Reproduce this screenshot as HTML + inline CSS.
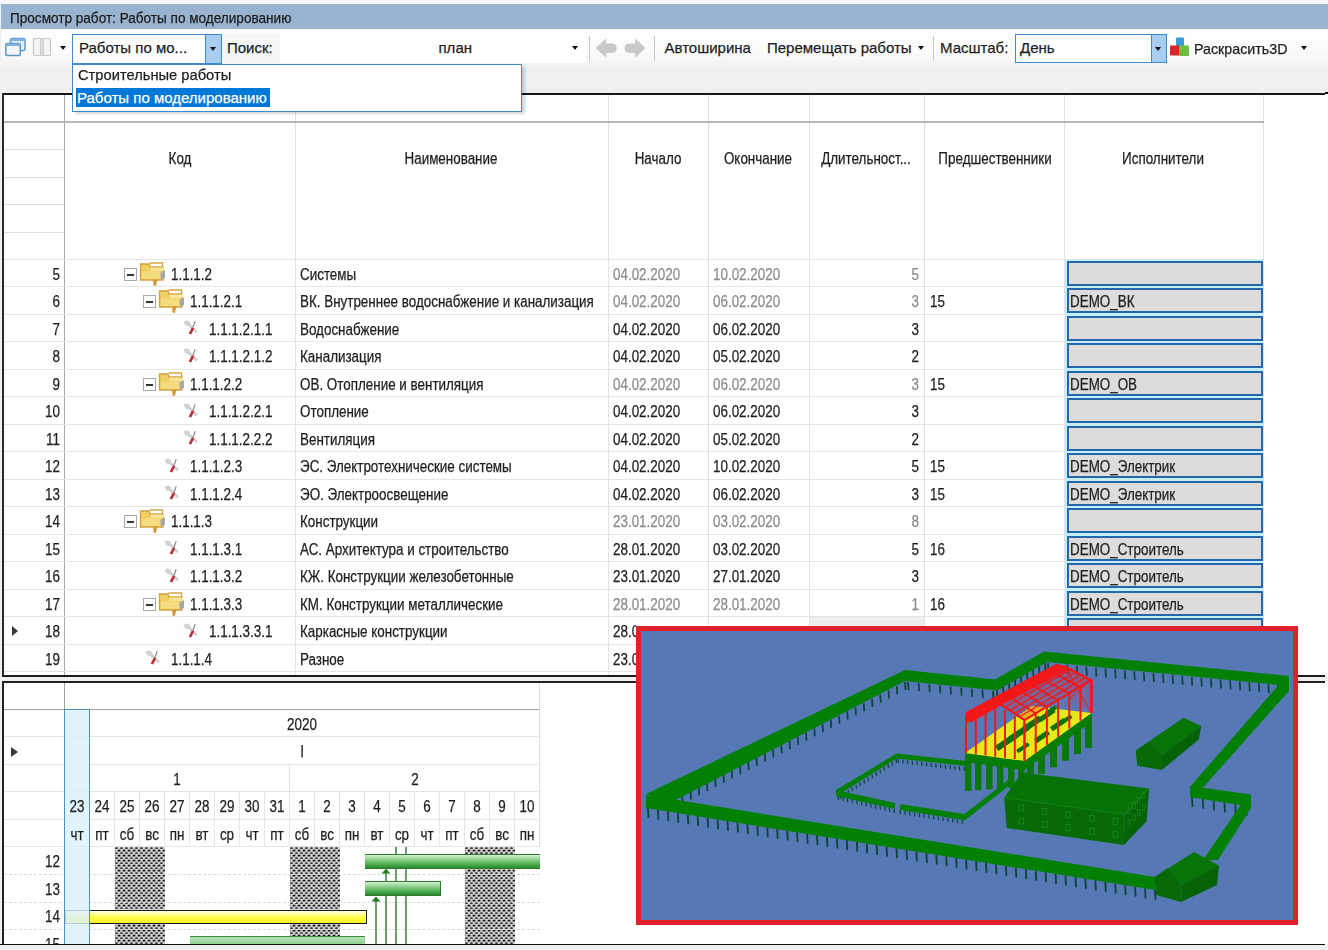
<!DOCTYPE html><html><head><meta charset="utf-8"><style>
*{margin:0;padding:0;box-sizing:border-box}
html,body{width:1328px;height:950px;overflow:hidden;background:#f0f0f0;font-family:"Liberation Sans",sans-serif;color:#1e1e1e}
.a{position:absolute}
.t{position:absolute;white-space:nowrap;line-height:1;-webkit-text-stroke:0.25px currentColor}
.g{font-size:13.6px}
.tb{font-size:15px}
.gr{color:#8a8a8a}
.hl{position:absolute;height:1px;background:#e3e3e3}
.vl{position:absolute;width:1px;background:#e3e3e3}
</style></head><body>
<div class="a" style="left:0;top:0;width:1328px;height:4px;background:#f8f8fc"></div>
<div class="a" style="left:1px;top:4px;width:1327px;height:25px;background:#99b4d1"></div>
<div class="t" style="left:9.50px;top:9.90px;font-size:15px;color:#1a1a1a;transform:scaleX(0.905);transform-origin:0 0;">Просмотр работ: Работы по моделированию</div>
<div class="a" style="left:1px;top:29px;width:1327px;height:65px;background:linear-gradient(#fefefe 0px,#fbfbfb 22px,#f5f5f5 33px,#f0f0f0 40px,#f0f0f0 65px)"></div>
<div class="a" style="left:222px;top:34px;width:58px;height:29px;background:#f6f6f6"></div>
<svg class="a" style="left:4px;top:36px" width="24" height="22" viewBox="0 0 24 22">
<rect x="6.5" y="2.5" width="14.5" height="12" rx="1.5" fill="#e4f0fa" stroke="#5e98c8" stroke-width="1.5"/>
<rect x="6.5" y="2.5" width="14.5" height="2.5" fill="#7cb0de"/>
<rect x="1.8" y="7.5" width="14.5" height="12" rx="1.5" fill="#eef4f8" stroke="#5e94c0" stroke-width="1.5"/>
<rect x="1.8" y="7.5" width="14.5" height="2.5" fill="#7cb0de"/>
</svg>
<svg class="a" style="left:32px;top:37px" width="20" height="20" viewBox="0 0 20 20">
<rect x="1.5" y="1.5" width="17" height="17" rx="1" fill="#f4f4f4" stroke="#c8c8c8" stroke-width="1.2"/>
<rect x="8.6" y="1.5" width="2.8" height="17" fill="#dedede"/>
<line x1="8.6" y1="1.5" x2="8.6" y2="18.5" stroke="#c4c4c4" stroke-width="0.8"/><line x1="11.4" y1="1.5" x2="11.4" y2="18.5" stroke="#c4c4c4" stroke-width="0.8"/>
</svg>
<div class="a" style="left:60px;top:46px;width:0;height:0;border-left:3.5px solid transparent;border-right:3.5px solid transparent;border-top:4px solid #111"></div>
<div class="a" style="left:72px;top:34px;width:150px;height:30px;background:#fff;border:1px solid #3c8bd0"></div>
<div class="a" style="left:205px;top:35px;width:16px;height:28px;background:#a8cdee;border-left:1px solid #3c8bd0"></div>
<div class="a" style="left:209.5px;top:47px;width:0;height:0;border-left:3.5px solid transparent;border-right:3.5px solid transparent;border-top:4px solid #111"></div>
<div class="t" style="left:79.00px;top:40.30px;font-size:15px;transform:scaleX(1);transform-origin:0 0;">Работы по мо...</div>
<div class="t" style="left:227.00px;top:40.30px;font-size:15px;transform:scaleX(1);transform-origin:0 0;">Поиск:</div>
<div class="a" style="left:280px;top:33px;width:305px;height:30px;background:#ffffff"></div>
<div class="t" style="left:438.50px;top:40.30px;font-size:15px;transform:scaleX(1);transform-origin:0 0;">план</div>
<div class="a" style="left:572px;top:46px;width:0;height:0;border-left:3.5px solid transparent;border-right:3.5px solid transparent;border-top:4px solid #111"></div>
<div class="a" style="left:589px;top:36px;width:1px;height:25px;background:#c8c8c8"></div>
<svg class="a" style="left:595px;top:38px" width="52" height="20" viewBox="0 0 52 20">
<path d="M1.1 10 L10.8 1.2 L10.8 5.9 L17 5.9 Q21.3 5.9 21.3 10.2 Q21.3 14.5 17 14.5 L10.8 14.5 L10.8 19 Z" fill="#c9c9c9" stroke="#bcbcbc" stroke-width="0.6"/>
<path d="M50.1 10 L40.6 1.2 L40.6 5.9 L34.2 5.9 Q30 5.9 30 10.2 Q30 14.5 34.2 14.5 L40.6 14.5 L40.6 19 Z" fill="#c9c9c9" stroke="#bcbcbc" stroke-width="0.6"/>
</svg>
<div class="a" style="left:654px;top:36px;width:1px;height:25px;background:#c8c8c8"></div>
<div class="t" style="left:664.50px;top:40.30px;font-size:15px;transform:scaleX(1);transform-origin:0 0;">Автоширина</div>
<div class="t" style="left:767.00px;top:40.30px;font-size:15px;transform:scaleX(1);transform-origin:0 0;">Перемещать работы</div>
<div class="a" style="left:917.5px;top:46px;width:0;height:0;border-left:3.5px solid transparent;border-right:3.5px solid transparent;border-top:4px solid #111"></div>
<div class="a" style="left:933px;top:36px;width:1px;height:25px;background:#c8c8c8"></div>
<div class="t" style="left:940.00px;top:40.30px;font-size:15px;transform:scaleX(1);transform-origin:0 0;">Масштаб:</div>
<div class="a" style="left:1015px;top:34px;width:152px;height:29px;background:#fff;border:1px solid #3c8bd0"></div>
<div class="a" style="left:1151px;top:35px;width:15px;height:27px;background:#a8cdee;border-left:1px solid #3c8bd0"></div>
<div class="a" style="left:1155px;top:47px;width:0;height:0;border-left:3.5px solid transparent;border-right:3.5px solid transparent;border-top:4px solid #111"></div>
<div class="t" style="left:1020.00px;top:40.30px;font-size:15px;transform:scaleX(1);transform-origin:0 0;">День</div>
<svg class="a" style="left:1169px;top:37px" width="21" height="20" viewBox="0 0 21 20">
<rect x="7" y="0.5" width="8" height="8.5" rx="1" fill="#3a9ad8"/>
<rect x="1" y="8.5" width="9.5" height="10" rx="1" fill="#d9262b"/>
<rect x="10" y="8.5" width="10" height="10.5" rx="1" fill="#6cbf3c"/>
</svg>
<div class="t" style="left:1194.30px;top:40.80px;font-size:15px;transform:scaleX(0.95);transform-origin:0 0;">Раскрасить3D</div>
<div class="a" style="left:1301px;top:46px;width:0;height:0;border-left:3.5px solid transparent;border-right:3.5px solid transparent;border-top:4px solid #111"></div>
<div class="a" style="left:2px;top:94px;width:1326px;height:582px;background:#fff"></div>
<div class="a" style="left:1325px;top:92px;width:3px;height:1.5px;background:#111"></div>
<div class="a" style="left:2px;top:93px;width:1323px;height:2px;background:#161616"></div>
<div class="a" style="left:2px;top:93px;width:2px;height:583px;background:#2a2a2a"></div>
<div class="a" style="left:2px;top:675px;width:1323px;height:1.5px;background:#1a1a1a"></div>
<div class="a" style="left:64px;top:95px;width:1px;height:580px;background:#a8a8a8"></div>
<div class="a" style="left:295px;top:95px;width:1px;height:580px;background:#e2e2e2"></div>
<div class="a" style="left:608px;top:95px;width:1px;height:580px;background:#e2e2e2"></div>
<div class="a" style="left:708px;top:95px;width:1px;height:580px;background:#e2e2e2"></div>
<div class="a" style="left:809px;top:95px;width:1px;height:580px;background:#e2e2e2"></div>
<div class="a" style="left:924px;top:95px;width:1px;height:580px;background:#e2e2e2"></div>
<div class="a" style="left:1064px;top:95px;width:1px;height:580px;background:#e2e2e2"></div>
<div class="a" style="left:1263px;top:95px;width:1px;height:580px;background:#e2e2e2"></div>
<div class="a" style="left:4px;top:121px;width:1260px;height:1.7px;background:#b8b8b8"></div>
<div class="a" style="left:4px;top:149px;width:60px;height:1px;background:#e0e0e0"></div>
<div class="a" style="left:4px;top:177px;width:60px;height:1px;background:#e0e0e0"></div>
<div class="a" style="left:4px;top:204px;width:60px;height:1px;background:#e0e0e0"></div>
<div class="a" style="left:4px;top:232px;width:60px;height:1px;background:#e0e0e0"></div>
<div class="a" style="left:4px;top:259px;width:1259px;height:1px;background:#e5e5e5"></div>
<div class="a" style="left:4px;top:286px;width:1259px;height:1px;background:#e5e5e5"></div>
<div class="a" style="left:4px;top:314px;width:1259px;height:1px;background:#e5e5e5"></div>
<div class="a" style="left:4px;top:341px;width:1259px;height:1px;background:#e5e5e5"></div>
<div class="a" style="left:4px;top:369px;width:1259px;height:1px;background:#e5e5e5"></div>
<div class="a" style="left:4px;top:396px;width:1259px;height:1px;background:#e5e5e5"></div>
<div class="a" style="left:4px;top:424px;width:1259px;height:1px;background:#e5e5e5"></div>
<div class="a" style="left:4px;top:451px;width:1259px;height:1px;background:#e5e5e5"></div>
<div class="a" style="left:4px;top:479px;width:1259px;height:1px;background:#e5e5e5"></div>
<div class="a" style="left:4px;top:506px;width:1259px;height:1px;background:#e5e5e5"></div>
<div class="a" style="left:4px;top:534px;width:1259px;height:1px;background:#e5e5e5"></div>
<div class="a" style="left:4px;top:561px;width:1259px;height:1px;background:#e5e5e5"></div>
<div class="a" style="left:4px;top:589px;width:1259px;height:1px;background:#e5e5e5"></div>
<div class="a" style="left:4px;top:616px;width:1259px;height:1px;background:#e5e5e5"></div>
<div class="a" style="left:4px;top:644px;width:1259px;height:1px;background:#e5e5e5"></div>
<div class="a" style="left:4px;top:671px;width:1259px;height:1px;background:#e5e5e5"></div>
<div class="t" style="left:30.00px;width:300px;text-align:center;top:150.59px;font-size:15.6px;transform:scaleX(0.86);transform-origin:50% 0;">Код</div>
<div class="t" style="left:301.00px;width:300px;text-align:center;top:150.59px;font-size:15.6px;transform:scaleX(0.86);transform-origin:50% 0;">Наименование</div>
<div class="t" style="left:508.00px;width:300px;text-align:center;top:150.59px;font-size:15.6px;transform:scaleX(0.86);transform-origin:50% 0;">Начало</div>
<div class="t" style="left:607.80px;width:300px;text-align:center;top:150.59px;font-size:15.6px;transform:scaleX(0.86);transform-origin:50% 0;">Окончание</div>
<div class="t" style="left:716.00px;width:300px;text-align:center;top:150.59px;font-size:15.6px;transform:scaleX(0.86);transform-origin:50% 0;">Длительност...</div>
<div class="t" style="left:844.50px;width:300px;text-align:center;top:150.59px;font-size:15.6px;transform:scaleX(0.86);transform-origin:50% 0;">Предшественники</div>
<div class="t" style="left:1013.00px;width:300px;text-align:center;top:150.59px;font-size:15.6px;transform:scaleX(0.86);transform-origin:50% 0;">Исполнители</div>
<div class="t" style="left:0.00px;width:60px;text-align:right;top:266.69px;font-size:15.6px;transform:scaleX(0.86);transform-origin:100% 0;">5</div>
<div class="a" style="left:124px;top:268px;width:13px;height:13px;border:1px solid #a8a8a8;background:#fff"><div class="a" style="left:2px;top:5px;width:7px;height:1.5px;background:#333"></div></div>
<svg class="a" style="left:139px;top:261.8px" width="28" height="26" viewBox="0 0 28 26">
<path d="M10.5 1 h13 v4" fill="none" stroke="#d6a843" stroke-width="1.3"/>
<path d="M1.5 2 h8.5 l1 3 h13 v13 h-22.5 z" fill="#f2cf62" stroke="#d3a23e" stroke-width="1.3"/>
<path d="M11.5 5.5 h13.5 v3.5 h-13.5 z" fill="#f7e49a"/>
<rect x="3" y="9.5" width="18" height="7.5" fill="#f6dc80"/>
<path d="M21.5 11 L26 8 L26 16 L22 18 Z" fill="#a4a8ae"/>
<path d="M14 18 L18.5 17 L17 24 L14.5 23.5 Z" fill="#d49a3a"/>
</svg>
<div class="t" style="left:170.50px;top:266.69px;font-size:15.6px;transform:scaleX(0.86);transform-origin:0 0;">1.1.1.2</div>
<div class="t" style="left:300.00px;top:266.69px;font-size:15.6px;transform:scaleX(0.86);transform-origin:0 0;">Системы</div>
<div class="t" style="left:613.00px;top:266.69px;font-size:15.6px;color:#8c8c8c;transform:scaleX(0.86);transform-origin:0 0;">04.02.2020</div>
<div class="t" style="left:713.00px;top:266.69px;font-size:15.6px;color:#8c8c8c;transform:scaleX(0.86);transform-origin:0 0;">10.02.2020</div>
<div class="t" style="left:820.00px;width:99px;text-align:right;top:266.69px;font-size:15.6px;color:#8c8c8c;transform:scaleX(0.86);transform-origin:100% 0;">5</div>
<div class="a" style="left:1065px;top:259px;width:198px;height:29px;background:#c4eefd"></div>
<div class="a" style="left:1066.5px;top:261px;width:196px;height:25px;background:#dcdcdc;border:2.5px solid #2568aa"></div>
<div class="t" style="left:0.00px;width:60px;text-align:right;top:294.19px;font-size:15.6px;transform:scaleX(0.86);transform-origin:100% 0;">6</div>
<div class="a" style="left:143px;top:295px;width:13px;height:13px;border:1px solid #a8a8a8;background:#fff"><div class="a" style="left:2px;top:5px;width:7px;height:1.5px;background:#333"></div></div>
<svg class="a" style="left:158px;top:289.3px" width="28" height="26" viewBox="0 0 28 26">
<path d="M10.5 1 h13 v4" fill="none" stroke="#d6a843" stroke-width="1.3"/>
<path d="M1.5 2 h8.5 l1 3 h13 v13 h-22.5 z" fill="#f2cf62" stroke="#d3a23e" stroke-width="1.3"/>
<path d="M11.5 5.5 h13.5 v3.5 h-13.5 z" fill="#f7e49a"/>
<rect x="3" y="9.5" width="18" height="7.5" fill="#f6dc80"/>
<path d="M21.5 11 L26 8 L26 16 L22 18 Z" fill="#a4a8ae"/>
<path d="M14 18 L18.5 17 L17 24 L14.5 23.5 Z" fill="#d49a3a"/>
</svg>
<div class="t" style="left:189.50px;top:294.19px;font-size:15.6px;transform:scaleX(0.86);transform-origin:0 0;">1.1.1.2.1</div>
<div class="t" style="left:300.00px;top:294.19px;font-size:15.6px;transform:scaleX(0.86);transform-origin:0 0;">ВК. Внутреннее водоснабжение и канализация</div>
<div class="t" style="left:613.00px;top:294.19px;font-size:15.6px;color:#8c8c8c;transform:scaleX(0.86);transform-origin:0 0;">04.02.2020</div>
<div class="t" style="left:713.00px;top:294.19px;font-size:15.6px;color:#8c8c8c;transform:scaleX(0.86);transform-origin:0 0;">06.02.2020</div>
<div class="t" style="left:820.00px;width:99px;text-align:right;top:294.19px;font-size:15.6px;color:#8c8c8c;transform:scaleX(0.86);transform-origin:100% 0;">3</div>
<div class="t" style="left:929.70px;top:294.19px;font-size:15.6px;transform:scaleX(0.86);transform-origin:0 0;">15</div>
<div class="a" style="left:1065px;top:286px;width:198px;height:29px;background:#c4eefd"></div>
<div class="a" style="left:1066.5px;top:288px;width:196px;height:25px;background:#dcdcdc;border:2.5px solid #2568aa"></div>
<div class="t" style="left:1069.50px;top:294.19px;font-size:15.6px;transform:scaleX(0.86);transform-origin:0 0;">DEMO_ВК</div>
<div class="t" style="left:0.00px;width:60px;text-align:right;top:321.69px;font-size:15.6px;transform:scaleX(0.86);transform-origin:100% 0;">7</div>
<svg class="a" style="left:182.5px;top:320.3px" width="16" height="16" viewBox="0 0 16 16">
<path d="M0.5 2 Q3 -0.8 6.5 1.5 L7.5 4 L14.8 11.3 L13 13.6 L5.5 6.2 L2.3 5.6 Z" fill="#d2d2d2"/>
<line x1="12.2" y1="1.2" x2="10" y2="7.2" stroke="#8a8a8a" stroke-width="1.2"/>
<path d="M9 7.3 L11.2 8.4 L8.2 14.6 L5.6 13.5 Z" fill="#b8303a"/>
</svg>
<div class="t" style="left:208.50px;top:321.69px;font-size:15.6px;transform:scaleX(0.86);transform-origin:0 0;">1.1.1.2.1.1</div>
<div class="t" style="left:300.00px;top:321.69px;font-size:15.6px;transform:scaleX(0.86);transform-origin:0 0;">Водоснабжение</div>
<div class="t" style="left:613.00px;top:321.69px;font-size:15.6px;transform:scaleX(0.86);transform-origin:0 0;">04.02.2020</div>
<div class="t" style="left:713.00px;top:321.69px;font-size:15.6px;transform:scaleX(0.86);transform-origin:0 0;">06.02.2020</div>
<div class="t" style="left:820.00px;width:99px;text-align:right;top:321.69px;font-size:15.6px;transform:scaleX(0.86);transform-origin:100% 0;">3</div>
<div class="a" style="left:1065px;top:314px;width:198px;height:29px;background:#c4eefd"></div>
<div class="a" style="left:1066.5px;top:316px;width:196px;height:25px;background:#dcdcdc;border:2.5px solid #2568aa"></div>
<div class="t" style="left:0.00px;width:60px;text-align:right;top:349.19px;font-size:15.6px;transform:scaleX(0.86);transform-origin:100% 0;">8</div>
<svg class="a" style="left:182.5px;top:347.8px" width="16" height="16" viewBox="0 0 16 16">
<path d="M0.5 2 Q3 -0.8 6.5 1.5 L7.5 4 L14.8 11.3 L13 13.6 L5.5 6.2 L2.3 5.6 Z" fill="#d2d2d2"/>
<line x1="12.2" y1="1.2" x2="10" y2="7.2" stroke="#8a8a8a" stroke-width="1.2"/>
<path d="M9 7.3 L11.2 8.4 L8.2 14.6 L5.6 13.5 Z" fill="#b8303a"/>
</svg>
<div class="t" style="left:208.50px;top:349.19px;font-size:15.6px;transform:scaleX(0.86);transform-origin:0 0;">1.1.1.2.1.2</div>
<div class="t" style="left:300.00px;top:349.19px;font-size:15.6px;transform:scaleX(0.86);transform-origin:0 0;">Канализация</div>
<div class="t" style="left:613.00px;top:349.19px;font-size:15.6px;transform:scaleX(0.86);transform-origin:0 0;">04.02.2020</div>
<div class="t" style="left:713.00px;top:349.19px;font-size:15.6px;transform:scaleX(0.86);transform-origin:0 0;">05.02.2020</div>
<div class="t" style="left:820.00px;width:99px;text-align:right;top:349.19px;font-size:15.6px;transform:scaleX(0.86);transform-origin:100% 0;">2</div>
<div class="a" style="left:1065px;top:341px;width:198px;height:29px;background:#c4eefd"></div>
<div class="a" style="left:1066.5px;top:343px;width:196px;height:25px;background:#dcdcdc;border:2.5px solid #2568aa"></div>
<div class="t" style="left:0.00px;width:60px;text-align:right;top:376.69px;font-size:15.6px;transform:scaleX(0.86);transform-origin:100% 0;">9</div>
<div class="a" style="left:143px;top:378px;width:13px;height:13px;border:1px solid #a8a8a8;background:#fff"><div class="a" style="left:2px;top:5px;width:7px;height:1.5px;background:#333"></div></div>
<svg class="a" style="left:158px;top:371.8px" width="28" height="26" viewBox="0 0 28 26">
<path d="M10.5 1 h13 v4" fill="none" stroke="#d6a843" stroke-width="1.3"/>
<path d="M1.5 2 h8.5 l1 3 h13 v13 h-22.5 z" fill="#f2cf62" stroke="#d3a23e" stroke-width="1.3"/>
<path d="M11.5 5.5 h13.5 v3.5 h-13.5 z" fill="#f7e49a"/>
<rect x="3" y="9.5" width="18" height="7.5" fill="#f6dc80"/>
<path d="M21.5 11 L26 8 L26 16 L22 18 Z" fill="#a4a8ae"/>
<path d="M14 18 L18.5 17 L17 24 L14.5 23.5 Z" fill="#d49a3a"/>
</svg>
<div class="t" style="left:189.50px;top:376.69px;font-size:15.6px;transform:scaleX(0.86);transform-origin:0 0;">1.1.1.2.2</div>
<div class="t" style="left:300.00px;top:376.69px;font-size:15.6px;transform:scaleX(0.86);transform-origin:0 0;">ОВ. Отопление и вентиляция</div>
<div class="t" style="left:613.00px;top:376.69px;font-size:15.6px;color:#8c8c8c;transform:scaleX(0.86);transform-origin:0 0;">04.02.2020</div>
<div class="t" style="left:713.00px;top:376.69px;font-size:15.6px;color:#8c8c8c;transform:scaleX(0.86);transform-origin:0 0;">06.02.2020</div>
<div class="t" style="left:820.00px;width:99px;text-align:right;top:376.69px;font-size:15.6px;color:#8c8c8c;transform:scaleX(0.86);transform-origin:100% 0;">3</div>
<div class="t" style="left:929.70px;top:376.69px;font-size:15.6px;transform:scaleX(0.86);transform-origin:0 0;">15</div>
<div class="a" style="left:1065px;top:369px;width:198px;height:29px;background:#c4eefd"></div>
<div class="a" style="left:1066.5px;top:371px;width:196px;height:25px;background:#dcdcdc;border:2.5px solid #2568aa"></div>
<div class="t" style="left:1069.50px;top:376.69px;font-size:15.6px;transform:scaleX(0.86);transform-origin:0 0;">DEMO_ОВ</div>
<div class="t" style="left:0.00px;width:60px;text-align:right;top:404.19px;font-size:15.6px;transform:scaleX(0.86);transform-origin:100% 0;">10</div>
<svg class="a" style="left:182.5px;top:402.8px" width="16" height="16" viewBox="0 0 16 16">
<path d="M0.5 2 Q3 -0.8 6.5 1.5 L7.5 4 L14.8 11.3 L13 13.6 L5.5 6.2 L2.3 5.6 Z" fill="#d2d2d2"/>
<line x1="12.2" y1="1.2" x2="10" y2="7.2" stroke="#8a8a8a" stroke-width="1.2"/>
<path d="M9 7.3 L11.2 8.4 L8.2 14.6 L5.6 13.5 Z" fill="#b8303a"/>
</svg>
<div class="t" style="left:208.50px;top:404.19px;font-size:15.6px;transform:scaleX(0.86);transform-origin:0 0;">1.1.1.2.2.1</div>
<div class="t" style="left:300.00px;top:404.19px;font-size:15.6px;transform:scaleX(0.86);transform-origin:0 0;">Отопление</div>
<div class="t" style="left:613.00px;top:404.19px;font-size:15.6px;transform:scaleX(0.86);transform-origin:0 0;">04.02.2020</div>
<div class="t" style="left:713.00px;top:404.19px;font-size:15.6px;transform:scaleX(0.86);transform-origin:0 0;">06.02.2020</div>
<div class="t" style="left:820.00px;width:99px;text-align:right;top:404.19px;font-size:15.6px;transform:scaleX(0.86);transform-origin:100% 0;">3</div>
<div class="a" style="left:1065px;top:396px;width:198px;height:29px;background:#c4eefd"></div>
<div class="a" style="left:1066.5px;top:398px;width:196px;height:25px;background:#dcdcdc;border:2.5px solid #2568aa"></div>
<div class="t" style="left:0.00px;width:60px;text-align:right;top:431.69px;font-size:15.6px;transform:scaleX(0.86);transform-origin:100% 0;">11</div>
<svg class="a" style="left:182.5px;top:430.3px" width="16" height="16" viewBox="0 0 16 16">
<path d="M0.5 2 Q3 -0.8 6.5 1.5 L7.5 4 L14.8 11.3 L13 13.6 L5.5 6.2 L2.3 5.6 Z" fill="#d2d2d2"/>
<line x1="12.2" y1="1.2" x2="10" y2="7.2" stroke="#8a8a8a" stroke-width="1.2"/>
<path d="M9 7.3 L11.2 8.4 L8.2 14.6 L5.6 13.5 Z" fill="#b8303a"/>
</svg>
<div class="t" style="left:208.50px;top:431.69px;font-size:15.6px;transform:scaleX(0.86);transform-origin:0 0;">1.1.1.2.2.2</div>
<div class="t" style="left:300.00px;top:431.69px;font-size:15.6px;transform:scaleX(0.86);transform-origin:0 0;">Вентиляция</div>
<div class="t" style="left:613.00px;top:431.69px;font-size:15.6px;transform:scaleX(0.86);transform-origin:0 0;">04.02.2020</div>
<div class="t" style="left:713.00px;top:431.69px;font-size:15.6px;transform:scaleX(0.86);transform-origin:0 0;">05.02.2020</div>
<div class="t" style="left:820.00px;width:99px;text-align:right;top:431.69px;font-size:15.6px;transform:scaleX(0.86);transform-origin:100% 0;">2</div>
<div class="a" style="left:1065px;top:424px;width:198px;height:29px;background:#c4eefd"></div>
<div class="a" style="left:1066.5px;top:426px;width:196px;height:25px;background:#dcdcdc;border:2.5px solid #2568aa"></div>
<div class="t" style="left:0.00px;width:60px;text-align:right;top:459.19px;font-size:15.6px;transform:scaleX(0.86);transform-origin:100% 0;">12</div>
<svg class="a" style="left:164px;top:457.8px" width="16" height="16" viewBox="0 0 16 16">
<path d="M0.5 2 Q3 -0.8 6.5 1.5 L7.5 4 L14.8 11.3 L13 13.6 L5.5 6.2 L2.3 5.6 Z" fill="#d2d2d2"/>
<line x1="12.2" y1="1.2" x2="10" y2="7.2" stroke="#8a8a8a" stroke-width="1.2"/>
<path d="M9 7.3 L11.2 8.4 L8.2 14.6 L5.6 13.5 Z" fill="#b8303a"/>
</svg>
<div class="t" style="left:190.00px;top:459.19px;font-size:15.6px;transform:scaleX(0.86);transform-origin:0 0;">1.1.1.2.3</div>
<div class="t" style="left:300.00px;top:459.19px;font-size:15.6px;transform:scaleX(0.86);transform-origin:0 0;">ЭС. Электротехнические системы</div>
<div class="t" style="left:613.00px;top:459.19px;font-size:15.6px;transform:scaleX(0.86);transform-origin:0 0;">04.02.2020</div>
<div class="t" style="left:713.00px;top:459.19px;font-size:15.6px;transform:scaleX(0.86);transform-origin:0 0;">10.02.2020</div>
<div class="t" style="left:820.00px;width:99px;text-align:right;top:459.19px;font-size:15.6px;transform:scaleX(0.86);transform-origin:100% 0;">5</div>
<div class="t" style="left:929.70px;top:459.19px;font-size:15.6px;transform:scaleX(0.86);transform-origin:0 0;">15</div>
<div class="a" style="left:1065px;top:451px;width:198px;height:29px;background:#c4eefd"></div>
<div class="a" style="left:1066.5px;top:453px;width:196px;height:25px;background:#dcdcdc;border:2.5px solid #2568aa"></div>
<div class="t" style="left:1069.50px;top:459.19px;font-size:15.6px;transform:scaleX(0.86);transform-origin:0 0;">DEMO_Электрик</div>
<div class="t" style="left:0.00px;width:60px;text-align:right;top:486.69px;font-size:15.6px;transform:scaleX(0.86);transform-origin:100% 0;">13</div>
<svg class="a" style="left:164px;top:485.3px" width="16" height="16" viewBox="0 0 16 16">
<path d="M0.5 2 Q3 -0.8 6.5 1.5 L7.5 4 L14.8 11.3 L13 13.6 L5.5 6.2 L2.3 5.6 Z" fill="#d2d2d2"/>
<line x1="12.2" y1="1.2" x2="10" y2="7.2" stroke="#8a8a8a" stroke-width="1.2"/>
<path d="M9 7.3 L11.2 8.4 L8.2 14.6 L5.6 13.5 Z" fill="#b8303a"/>
</svg>
<div class="t" style="left:190.00px;top:486.69px;font-size:15.6px;transform:scaleX(0.86);transform-origin:0 0;">1.1.1.2.4</div>
<div class="t" style="left:300.00px;top:486.69px;font-size:15.6px;transform:scaleX(0.86);transform-origin:0 0;">ЭО. Электроосвещение</div>
<div class="t" style="left:613.00px;top:486.69px;font-size:15.6px;transform:scaleX(0.86);transform-origin:0 0;">04.02.2020</div>
<div class="t" style="left:713.00px;top:486.69px;font-size:15.6px;transform:scaleX(0.86);transform-origin:0 0;">06.02.2020</div>
<div class="t" style="left:820.00px;width:99px;text-align:right;top:486.69px;font-size:15.6px;transform:scaleX(0.86);transform-origin:100% 0;">3</div>
<div class="t" style="left:929.70px;top:486.69px;font-size:15.6px;transform:scaleX(0.86);transform-origin:0 0;">15</div>
<div class="a" style="left:1065px;top:479px;width:198px;height:29px;background:#c4eefd"></div>
<div class="a" style="left:1066.5px;top:481px;width:196px;height:25px;background:#dcdcdc;border:2.5px solid #2568aa"></div>
<div class="t" style="left:1069.50px;top:486.69px;font-size:15.6px;transform:scaleX(0.86);transform-origin:0 0;">DEMO_Электрик</div>
<div class="t" style="left:0.00px;width:60px;text-align:right;top:514.19px;font-size:15.6px;transform:scaleX(0.86);transform-origin:100% 0;">14</div>
<div class="a" style="left:124px;top:515px;width:13px;height:13px;border:1px solid #a8a8a8;background:#fff"><div class="a" style="left:2px;top:5px;width:7px;height:1.5px;background:#333"></div></div>
<svg class="a" style="left:139px;top:509.3px" width="28" height="26" viewBox="0 0 28 26">
<path d="M10.5 1 h13 v4" fill="none" stroke="#d6a843" stroke-width="1.3"/>
<path d="M1.5 2 h8.5 l1 3 h13 v13 h-22.5 z" fill="#f2cf62" stroke="#d3a23e" stroke-width="1.3"/>
<path d="M11.5 5.5 h13.5 v3.5 h-13.5 z" fill="#f7e49a"/>
<rect x="3" y="9.5" width="18" height="7.5" fill="#f6dc80"/>
<path d="M21.5 11 L26 8 L26 16 L22 18 Z" fill="#a4a8ae"/>
<path d="M14 18 L18.5 17 L17 24 L14.5 23.5 Z" fill="#d49a3a"/>
</svg>
<div class="t" style="left:170.50px;top:514.19px;font-size:15.6px;transform:scaleX(0.86);transform-origin:0 0;">1.1.1.3</div>
<div class="t" style="left:300.00px;top:514.19px;font-size:15.6px;transform:scaleX(0.86);transform-origin:0 0;">Конструкции</div>
<div class="t" style="left:613.00px;top:514.19px;font-size:15.6px;color:#8c8c8c;transform:scaleX(0.86);transform-origin:0 0;">23.01.2020</div>
<div class="t" style="left:713.00px;top:514.19px;font-size:15.6px;color:#8c8c8c;transform:scaleX(0.86);transform-origin:0 0;">03.02.2020</div>
<div class="t" style="left:820.00px;width:99px;text-align:right;top:514.19px;font-size:15.6px;color:#8c8c8c;transform:scaleX(0.86);transform-origin:100% 0;">8</div>
<div class="a" style="left:1065px;top:506px;width:198px;height:29px;background:#c4eefd"></div>
<div class="a" style="left:1066.5px;top:508px;width:196px;height:25px;background:#dcdcdc;border:2.5px solid #2568aa"></div>
<div class="t" style="left:0.00px;width:60px;text-align:right;top:541.69px;font-size:15.6px;transform:scaleX(0.86);transform-origin:100% 0;">15</div>
<svg class="a" style="left:164px;top:540.3px" width="16" height="16" viewBox="0 0 16 16">
<path d="M0.5 2 Q3 -0.8 6.5 1.5 L7.5 4 L14.8 11.3 L13 13.6 L5.5 6.2 L2.3 5.6 Z" fill="#d2d2d2"/>
<line x1="12.2" y1="1.2" x2="10" y2="7.2" stroke="#8a8a8a" stroke-width="1.2"/>
<path d="M9 7.3 L11.2 8.4 L8.2 14.6 L5.6 13.5 Z" fill="#b8303a"/>
</svg>
<div class="t" style="left:190.00px;top:541.69px;font-size:15.6px;transform:scaleX(0.86);transform-origin:0 0;">1.1.1.3.1</div>
<div class="t" style="left:300.00px;top:541.69px;font-size:15.6px;transform:scaleX(0.86);transform-origin:0 0;">АС. Архитектура и строительство</div>
<div class="t" style="left:613.00px;top:541.69px;font-size:15.6px;transform:scaleX(0.86);transform-origin:0 0;">28.01.2020</div>
<div class="t" style="left:713.00px;top:541.69px;font-size:15.6px;transform:scaleX(0.86);transform-origin:0 0;">03.02.2020</div>
<div class="t" style="left:820.00px;width:99px;text-align:right;top:541.69px;font-size:15.6px;transform:scaleX(0.86);transform-origin:100% 0;">5</div>
<div class="t" style="left:929.70px;top:541.69px;font-size:15.6px;transform:scaleX(0.86);transform-origin:0 0;">16</div>
<div class="a" style="left:1065px;top:534px;width:198px;height:29px;background:#c4eefd"></div>
<div class="a" style="left:1066.5px;top:536px;width:196px;height:25px;background:#dcdcdc;border:2.5px solid #2568aa"></div>
<div class="t" style="left:1069.50px;top:541.69px;font-size:15.6px;transform:scaleX(0.86);transform-origin:0 0;">DEMO_Строитель</div>
<div class="t" style="left:0.00px;width:60px;text-align:right;top:569.19px;font-size:15.6px;transform:scaleX(0.86);transform-origin:100% 0;">16</div>
<svg class="a" style="left:164px;top:567.8px" width="16" height="16" viewBox="0 0 16 16">
<path d="M0.5 2 Q3 -0.8 6.5 1.5 L7.5 4 L14.8 11.3 L13 13.6 L5.5 6.2 L2.3 5.6 Z" fill="#d2d2d2"/>
<line x1="12.2" y1="1.2" x2="10" y2="7.2" stroke="#8a8a8a" stroke-width="1.2"/>
<path d="M9 7.3 L11.2 8.4 L8.2 14.6 L5.6 13.5 Z" fill="#b8303a"/>
</svg>
<div class="t" style="left:190.00px;top:569.19px;font-size:15.6px;transform:scaleX(0.86);transform-origin:0 0;">1.1.1.3.2</div>
<div class="t" style="left:300.00px;top:569.19px;font-size:15.6px;transform:scaleX(0.86);transform-origin:0 0;">КЖ. Конструкции железобетонные</div>
<div class="t" style="left:613.00px;top:569.19px;font-size:15.6px;transform:scaleX(0.86);transform-origin:0 0;">23.01.2020</div>
<div class="t" style="left:713.00px;top:569.19px;font-size:15.6px;transform:scaleX(0.86);transform-origin:0 0;">27.01.2020</div>
<div class="t" style="left:820.00px;width:99px;text-align:right;top:569.19px;font-size:15.6px;transform:scaleX(0.86);transform-origin:100% 0;">3</div>
<div class="a" style="left:1065px;top:561px;width:198px;height:29px;background:#c4eefd"></div>
<div class="a" style="left:1066.5px;top:563px;width:196px;height:25px;background:#dcdcdc;border:2.5px solid #2568aa"></div>
<div class="t" style="left:1069.50px;top:569.19px;font-size:15.6px;transform:scaleX(0.86);transform-origin:0 0;">DEMO_Строитель</div>
<div class="t" style="left:0.00px;width:60px;text-align:right;top:596.69px;font-size:15.6px;transform:scaleX(0.86);transform-origin:100% 0;">17</div>
<div class="a" style="left:143px;top:598px;width:13px;height:13px;border:1px solid #a8a8a8;background:#fff"><div class="a" style="left:2px;top:5px;width:7px;height:1.5px;background:#333"></div></div>
<svg class="a" style="left:158px;top:591.8px" width="28" height="26" viewBox="0 0 28 26">
<path d="M10.5 1 h13 v4" fill="none" stroke="#d6a843" stroke-width="1.3"/>
<path d="M1.5 2 h8.5 l1 3 h13 v13 h-22.5 z" fill="#f2cf62" stroke="#d3a23e" stroke-width="1.3"/>
<path d="M11.5 5.5 h13.5 v3.5 h-13.5 z" fill="#f7e49a"/>
<rect x="3" y="9.5" width="18" height="7.5" fill="#f6dc80"/>
<path d="M21.5 11 L26 8 L26 16 L22 18 Z" fill="#a4a8ae"/>
<path d="M14 18 L18.5 17 L17 24 L14.5 23.5 Z" fill="#d49a3a"/>
</svg>
<div class="t" style="left:189.50px;top:596.69px;font-size:15.6px;transform:scaleX(0.86);transform-origin:0 0;">1.1.1.3.3</div>
<div class="t" style="left:300.00px;top:596.69px;font-size:15.6px;transform:scaleX(0.86);transform-origin:0 0;">КМ. Конструкции металлические</div>
<div class="t" style="left:613.00px;top:596.69px;font-size:15.6px;color:#8c8c8c;transform:scaleX(0.86);transform-origin:0 0;">28.01.2020</div>
<div class="t" style="left:713.00px;top:596.69px;font-size:15.6px;color:#8c8c8c;transform:scaleX(0.86);transform-origin:0 0;">28.01.2020</div>
<div class="t" style="left:820.00px;width:99px;text-align:right;top:596.69px;font-size:15.6px;color:#8c8c8c;transform:scaleX(0.86);transform-origin:100% 0;">1</div>
<div class="t" style="left:929.70px;top:596.69px;font-size:15.6px;transform:scaleX(0.86);transform-origin:0 0;">16</div>
<div class="a" style="left:1065px;top:589px;width:198px;height:29px;background:#c4eefd"></div>
<div class="a" style="left:1066.5px;top:591px;width:196px;height:25px;background:#dcdcdc;border:2.5px solid #2568aa"></div>
<div class="t" style="left:1069.50px;top:596.69px;font-size:15.6px;transform:scaleX(0.86);transform-origin:0 0;">DEMO_Строитель</div>
<div class="t" style="left:0.00px;width:60px;text-align:right;top:624.19px;font-size:15.6px;transform:scaleX(0.86);transform-origin:100% 0;">18</div>
<svg class="a" style="left:182.5px;top:622.8px" width="16" height="16" viewBox="0 0 16 16">
<path d="M0.5 2 Q3 -0.8 6.5 1.5 L7.5 4 L14.8 11.3 L13 13.6 L5.5 6.2 L2.3 5.6 Z" fill="#d2d2d2"/>
<line x1="12.2" y1="1.2" x2="10" y2="7.2" stroke="#8a8a8a" stroke-width="1.2"/>
<path d="M9 7.3 L11.2 8.4 L8.2 14.6 L5.6 13.5 Z" fill="#b8303a"/>
</svg>
<div class="t" style="left:208.50px;top:624.19px;font-size:15.6px;transform:scaleX(0.86);transform-origin:0 0;">1.1.1.3.3.1</div>
<div class="t" style="left:300.00px;top:624.19px;font-size:15.6px;transform:scaleX(0.86);transform-origin:0 0;">Каркасные конструкции</div>
<div class="a" style="left:612px;top:616.8px;width:24px;height:27px;overflow:hidden">
<div class="t" style="left:1.00px;top:7.39px;font-size:15.6px;transform:scaleX(0.86);transform-origin:0 0;">28.01.2020</div>
</div>
<div class="a" style="left:1065px;top:616px;width:198px;height:29px;background:#c4eefd"></div>
<div class="a" style="left:1066.5px;top:618px;width:196px;height:25px;background:#dcdcdc;border:2.5px solid #2568aa"></div>
<div class="t" style="left:0.00px;width:60px;text-align:right;top:651.69px;font-size:15.6px;transform:scaleX(0.86);transform-origin:100% 0;">19</div>
<svg class="a" style="left:145px;top:650.3px" width="16" height="16" viewBox="0 0 16 16">
<path d="M0.5 2 Q3 -0.8 6.5 1.5 L7.5 4 L14.8 11.3 L13 13.6 L5.5 6.2 L2.3 5.6 Z" fill="#d2d2d2"/>
<line x1="12.2" y1="1.2" x2="10" y2="7.2" stroke="#8a8a8a" stroke-width="1.2"/>
<path d="M9 7.3 L11.2 8.4 L8.2 14.6 L5.6 13.5 Z" fill="#b8303a"/>
</svg>
<div class="t" style="left:171.00px;top:651.69px;font-size:15.6px;transform:scaleX(0.86);transform-origin:0 0;">1.1.1.4</div>
<div class="t" style="left:300.00px;top:651.69px;font-size:15.6px;transform:scaleX(0.86);transform-origin:0 0;">Разное</div>
<div class="a" style="left:612px;top:644.3px;width:24px;height:27px;overflow:hidden">
<div class="t" style="left:1.00px;top:7.39px;font-size:15.6px;transform:scaleX(0.86);transform-origin:0 0;">23.01.2020</div>
</div>
<div class="a" style="left:1065px;top:644px;width:198px;height:29px;background:#c4eefd"></div>
<div class="a" style="left:1066.5px;top:646px;width:196px;height:25px;background:#dcdcdc;border:2.5px solid #2568aa"></div>
<div class="a" style="left:11.5px;top:626px;width:0;height:0;border-top:5.75px solid transparent;border-bottom:5.75px solid transparent;border-left:6.5px solid #383838"></div>
<div class="a" style="left:810px;top:617px;width:114px;height:26px;background:#ececec"></div>
<div class="a" style="left:2px;top:681px;width:1326px;height:264px;background:#fff"></div>
<div class="a" style="left:2px;top:681px;width:1323px;height:2px;background:#222"></div>
<div class="a" style="left:2px;top:681px;width:2px;height:264px;background:#222"></div>
<div class="a" style="left:64px;top:683px;width:1px;height:27px;background:#a0a0a0"></div>
<div class="a" style="left:4px;top:709px;width:536px;height:1px;background:#a0a0a0"></div>
<div class="a" style="left:539px;top:683px;width:1px;height:164px;background:#e0e0e0"></div>
<div class="a" style="left:4px;top:736px;width:536px;height:1px;background:#e4e4e4"></div>
<div class="a" style="left:4px;top:764px;width:536px;height:1px;background:#e4e4e4"></div>
<div class="a" style="left:4px;top:791px;width:536px;height:1px;background:#e4e4e4"></div>
<div class="a" style="left:4px;top:819px;width:536px;height:1px;background:#e4e4e4"></div>
<div class="a" style="left:4px;top:846px;width:536px;height:1px;background:#e4e4e4"></div>
<div class="a" style="left:89px;top:792px;width:1px;height:55px;background:#e6e6e6"></div>
<div class="a" style="left:114px;top:792px;width:1px;height:55px;background:#e6e6e6"></div>
<div class="a" style="left:139px;top:792px;width:1px;height:55px;background:#e6e6e6"></div>
<div class="a" style="left:164px;top:792px;width:1px;height:55px;background:#e6e6e6"></div>
<div class="a" style="left:189px;top:792px;width:1px;height:55px;background:#e6e6e6"></div>
<div class="a" style="left:214px;top:792px;width:1px;height:55px;background:#e6e6e6"></div>
<div class="a" style="left:239px;top:792px;width:1px;height:55px;background:#e6e6e6"></div>
<div class="a" style="left:264px;top:792px;width:1px;height:55px;background:#e6e6e6"></div>
<div class="a" style="left:289px;top:792px;width:1px;height:55px;background:#e6e6e6"></div>
<div class="a" style="left:314px;top:792px;width:1px;height:55px;background:#e6e6e6"></div>
<div class="a" style="left:339px;top:792px;width:1px;height:55px;background:#e6e6e6"></div>
<div class="a" style="left:364px;top:792px;width:1px;height:55px;background:#e6e6e6"></div>
<div class="a" style="left:389px;top:792px;width:1px;height:55px;background:#e6e6e6"></div>
<div class="a" style="left:414px;top:792px;width:1px;height:55px;background:#e6e6e6"></div>
<div class="a" style="left:439px;top:792px;width:1px;height:55px;background:#e6e6e6"></div>
<div class="a" style="left:464px;top:792px;width:1px;height:55px;background:#e6e6e6"></div>
<div class="a" style="left:489px;top:792px;width:1px;height:55px;background:#e6e6e6"></div>
<div class="a" style="left:514px;top:792px;width:1px;height:55px;background:#e6e6e6"></div>
<div class="a" style="left:289px;top:764px;width:1px;height:28px;background:#e0e0e0"></div>
<svg width="0" height="0" style="position:absolute"><defs><pattern id="hp" x="114.9" y="846.9" width="5" height="5" patternUnits="userSpaceOnUse"><rect width="5" height="5" fill="#d6d6d6"/><ellipse cx="1.55" cy="1.15" rx="1.45" ry="0.95" fill="#262626"/><ellipse cx="4.05" cy="3.65" rx="1.45" ry="0.95" fill="#000"/><ellipse cx="-0.95" cy="3.65" rx="1.45" ry="0.95" fill="#000"/></pattern></defs></svg>
<svg class="a" style="left:0;top:0" width="1328" height="950"><rect x="114.9" y="847" width="50.0" height="62.5" fill="url(#hp)"/></svg>
<svg class="a" style="left:0;top:0" width="1328" height="950"><rect x="114.9" y="923.5" width="50.0" height="20.5" fill="url(#hp)"/></svg>
<svg class="a" style="left:0;top:0" width="1328" height="950"><rect x="289.9" y="847" width="50.0" height="62.5" fill="url(#hp)"/></svg>
<svg class="a" style="left:0;top:0" width="1328" height="950"><rect x="289.9" y="923.5" width="50.0" height="13.0" fill="url(#hp)"/></svg>
<svg class="a" style="left:0;top:0" width="1328" height="950"><rect x="464.9" y="847" width="50.0" height="7" fill="url(#hp)"/></svg>
<svg class="a" style="left:0;top:0" width="1328" height="950"><rect x="464.9" y="868.5" width="50.0" height="75.5" fill="url(#hp)"/></svg>
<div class="a" style="left:4px;top:874px;width:536px;height:0;border-top:1px dashed #dcd8e4"></div>
<div class="a" style="left:4px;top:902px;width:536px;height:0;border-top:1px dashed #dcd8e4"></div>
<div class="a" style="left:4px;top:929px;width:536px;height:0;border-top:1px dashed #dcd8e4"></div>
<div class="a" style="left:65px;top:910px;width:301.5px;height:13.5px;border:1.5px solid #1a1a1a;background:linear-gradient(#fffff0,#ffff50 50%,#f8f020)"></div>
<div class="a" style="left:365px;top:854px;width:175px;height:14.5px;background:linear-gradient(#d0f2d0,#60b860 60%,#2a8a2a);border-top:1.2px solid #2d7a2d;border-bottom:1.2px solid #2d7a2d"></div>
<div class="a" style="left:365px;top:881px;width:75.5px;height:14.5px;background:linear-gradient(#d0f2d0,#60b860 60%,#2a8a2a);border-top:1.2px solid #2d7a2d;border-bottom:1.2px solid #2d7a2d;border-right:1px solid #2d7a2d"></div>
<div class="a" style="left:190px;top:936px;width:175px;height:8px;background:linear-gradient(#b8e4b8,#90d090);border-top:1.3px solid #3a8a3a"></div>
<svg class="a" style="left:0;top:0" width="1328" height="950">
<g stroke="#3a7e3a" stroke-width="1.5" fill="none">
<line x1="376" y1="899" x2="376" y2="944"/><line x1="386" y1="871" x2="386" y2="881"/><line x1="386" y1="896" x2="386" y2="944"/>
<line x1="396" y1="847" x2="396" y2="854"/><line x1="396" y1="868.5" x2="396" y2="881"/><line x1="396" y1="896" x2="396" y2="944"/>
<line x1="406" y1="847" x2="406" y2="854"/><line x1="406" y1="868.5" x2="406" y2="881"/><line x1="406" y1="896" x2="406" y2="944"/>
</g>
<path d="M371.5 901.5 L376 896.5 L380.5 901.5 Z" fill="#1f7a1f"/><path d="M381.5 873.5 L386 868.8 L390.5 873.5 Z" fill="#1f7a1f"/>
</svg>
<div class="a" style="left:64px;top:709px;width:26px;height:236px;background:rgba(218,242,252,0.82);border:1.5px solid #4b96c0;border-bottom:none"></div>
<div class="t" style="left:56.70px;width:40px;text-align:center;top:799.49px;font-size:15.6px;transform:scaleX(0.86);transform-origin:50% 0;">23</div>
<div class="t" style="left:56.70px;width:40px;text-align:center;top:826.99px;font-size:15.6px;transform:scaleX(0.86);transform-origin:50% 0;">чт</div>
<div class="t" style="left:81.72px;width:40px;text-align:center;top:799.49px;font-size:15.6px;transform:scaleX(0.86);transform-origin:50% 0;">24</div>
<div class="t" style="left:81.72px;width:40px;text-align:center;top:826.99px;font-size:15.6px;transform:scaleX(0.86);transform-origin:50% 0;">пт</div>
<div class="t" style="left:106.74px;width:40px;text-align:center;top:799.49px;font-size:15.6px;transform:scaleX(0.86);transform-origin:50% 0;">25</div>
<div class="t" style="left:106.74px;width:40px;text-align:center;top:826.99px;font-size:15.6px;transform:scaleX(0.86);transform-origin:50% 0;">сб</div>
<div class="t" style="left:131.76px;width:40px;text-align:center;top:799.49px;font-size:15.6px;transform:scaleX(0.86);transform-origin:50% 0;">26</div>
<div class="t" style="left:131.76px;width:40px;text-align:center;top:826.99px;font-size:15.6px;transform:scaleX(0.86);transform-origin:50% 0;">вс</div>
<div class="t" style="left:156.78px;width:40px;text-align:center;top:799.49px;font-size:15.6px;transform:scaleX(0.86);transform-origin:50% 0;">27</div>
<div class="t" style="left:156.78px;width:40px;text-align:center;top:826.99px;font-size:15.6px;transform:scaleX(0.86);transform-origin:50% 0;">пн</div>
<div class="t" style="left:181.80px;width:40px;text-align:center;top:799.49px;font-size:15.6px;transform:scaleX(0.86);transform-origin:50% 0;">28</div>
<div class="t" style="left:181.80px;width:40px;text-align:center;top:826.99px;font-size:15.6px;transform:scaleX(0.86);transform-origin:50% 0;">вт</div>
<div class="t" style="left:206.82px;width:40px;text-align:center;top:799.49px;font-size:15.6px;transform:scaleX(0.86);transform-origin:50% 0;">29</div>
<div class="t" style="left:206.82px;width:40px;text-align:center;top:826.99px;font-size:15.6px;transform:scaleX(0.86);transform-origin:50% 0;">ср</div>
<div class="t" style="left:231.84px;width:40px;text-align:center;top:799.49px;font-size:15.6px;transform:scaleX(0.86);transform-origin:50% 0;">30</div>
<div class="t" style="left:231.84px;width:40px;text-align:center;top:826.99px;font-size:15.6px;transform:scaleX(0.86);transform-origin:50% 0;">чт</div>
<div class="t" style="left:256.86px;width:40px;text-align:center;top:799.49px;font-size:15.6px;transform:scaleX(0.86);transform-origin:50% 0;">31</div>
<div class="t" style="left:256.86px;width:40px;text-align:center;top:826.99px;font-size:15.6px;transform:scaleX(0.86);transform-origin:50% 0;">пт</div>
<div class="t" style="left:281.88px;width:40px;text-align:center;top:799.49px;font-size:15.6px;transform:scaleX(0.86);transform-origin:50% 0;">1</div>
<div class="t" style="left:281.88px;width:40px;text-align:center;top:826.99px;font-size:15.6px;transform:scaleX(0.86);transform-origin:50% 0;">сб</div>
<div class="t" style="left:306.90px;width:40px;text-align:center;top:799.49px;font-size:15.6px;transform:scaleX(0.86);transform-origin:50% 0;">2</div>
<div class="t" style="left:306.90px;width:40px;text-align:center;top:826.99px;font-size:15.6px;transform:scaleX(0.86);transform-origin:50% 0;">вс</div>
<div class="t" style="left:331.92px;width:40px;text-align:center;top:799.49px;font-size:15.6px;transform:scaleX(0.86);transform-origin:50% 0;">3</div>
<div class="t" style="left:331.92px;width:40px;text-align:center;top:826.99px;font-size:15.6px;transform:scaleX(0.86);transform-origin:50% 0;">пн</div>
<div class="t" style="left:356.94px;width:40px;text-align:center;top:799.49px;font-size:15.6px;transform:scaleX(0.86);transform-origin:50% 0;">4</div>
<div class="t" style="left:356.94px;width:40px;text-align:center;top:826.99px;font-size:15.6px;transform:scaleX(0.86);transform-origin:50% 0;">вт</div>
<div class="t" style="left:381.96px;width:40px;text-align:center;top:799.49px;font-size:15.6px;transform:scaleX(0.86);transform-origin:50% 0;">5</div>
<div class="t" style="left:381.96px;width:40px;text-align:center;top:826.99px;font-size:15.6px;transform:scaleX(0.86);transform-origin:50% 0;">ср</div>
<div class="t" style="left:406.98px;width:40px;text-align:center;top:799.49px;font-size:15.6px;transform:scaleX(0.86);transform-origin:50% 0;">6</div>
<div class="t" style="left:406.98px;width:40px;text-align:center;top:826.99px;font-size:15.6px;transform:scaleX(0.86);transform-origin:50% 0;">чт</div>
<div class="t" style="left:432.00px;width:40px;text-align:center;top:799.49px;font-size:15.6px;transform:scaleX(0.86);transform-origin:50% 0;">7</div>
<div class="t" style="left:432.00px;width:40px;text-align:center;top:826.99px;font-size:15.6px;transform:scaleX(0.86);transform-origin:50% 0;">пт</div>
<div class="t" style="left:457.02px;width:40px;text-align:center;top:799.49px;font-size:15.6px;transform:scaleX(0.86);transform-origin:50% 0;">8</div>
<div class="t" style="left:457.02px;width:40px;text-align:center;top:826.99px;font-size:15.6px;transform:scaleX(0.86);transform-origin:50% 0;">сб</div>
<div class="t" style="left:482.04px;width:40px;text-align:center;top:799.49px;font-size:15.6px;transform:scaleX(0.86);transform-origin:50% 0;">9</div>
<div class="t" style="left:482.04px;width:40px;text-align:center;top:826.99px;font-size:15.6px;transform:scaleX(0.86);transform-origin:50% 0;">вс</div>
<div class="t" style="left:507.06px;width:40px;text-align:center;top:799.49px;font-size:15.6px;transform:scaleX(0.86);transform-origin:50% 0;">10</div>
<div class="t" style="left:507.06px;width:40px;text-align:center;top:826.99px;font-size:15.6px;transform:scaleX(0.86);transform-origin:50% 0;">пн</div>
<div class="t" style="left:251.50px;width:100px;text-align:center;top:716.99px;font-size:15.6px;transform:scaleX(0.86);transform-origin:50% 0;">2020</div>
<div class="t" style="left:251.50px;width:100px;text-align:center;top:744.39px;font-size:15.6px;transform:scaleX(0.86);transform-origin:50% 0;">I</div>
<div class="t" style="left:126.80px;width:100px;text-align:center;top:771.89px;font-size:15.6px;transform:scaleX(0.86);transform-origin:50% 0;">1</div>
<div class="t" style="left:364.50px;width:100px;text-align:center;top:771.89px;font-size:15.6px;transform:scaleX(0.86);transform-origin:50% 0;">2</div>
<div class="t" style="left:0.00px;width:60px;text-align:right;top:854.39px;font-size:15.6px;transform:scaleX(0.86);transform-origin:100% 0;">12</div>
<div class="t" style="left:0.00px;width:60px;text-align:right;top:881.89px;font-size:15.6px;transform:scaleX(0.86);transform-origin:100% 0;">13</div>
<div class="t" style="left:0.00px;width:60px;text-align:right;top:909.39px;font-size:15.6px;transform:scaleX(0.86);transform-origin:100% 0;">14</div>
<div class="t" style="left:0.00px;width:60px;text-align:right;top:936.89px;font-size:15.6px;transform:scaleX(0.86);transform-origin:100% 0;">15</div>
<div class="a" style="left:11px;top:747px;width:0;height:0;border-top:5.5px solid transparent;border-bottom:5.5px solid transparent;border-left:7px solid #383838"></div>
<div class="a" style="left:0;top:944px;width:1325px;height:1.5px;background:#111"></div>
<div class="a" style="left:0;top:945px;width:1328px;height:5px;background:#f0f0f0"></div>
<div class="a" style="left:75px;top:67px;width:450px;height:47px;background:rgba(0,0,0,0.16);filter:blur(1.5px)"></div>
<div class="a" style="left:72px;top:64px;width:450px;height:48px;background:#fff;border:1px solid #3c8bd0"></div>
<div class="t" style="left:77.70px;top:67.30px;font-size:15px;transform:scaleX(0.98);transform-origin:0 0;">Строительные работы</div>
<div class="a" style="left:76px;top:88px;width:194px;height:18.5px;background:#0078d7"></div>
<div class="t" style="left:77.00px;top:89.80px;font-size:15px;color:#fff;transform:scaleX(1);transform-origin:0 0;">Работы по моделированию</div>
<svg class="a" style="left:0;top:0" width="1328" height="950" viewBox="0 0 1328 950"><defs><clipPath id="vc"><rect x="641" y="631" width="652" height="289"/></clipPath></defs><rect x="638.5" y="628.5" width="657" height="294" fill="#5679b6" stroke="#e0202a" stroke-width="5"/><g clip-path="url(#vc)"><line x1="674.0" y1="800.0" x2="674.5" y2="808.0" stroke="#0a4434" stroke-width="1.7"/><line x1="682.2" y1="795.8" x2="682.8" y2="803.8" stroke="#0a4434" stroke-width="1.7"/><line x1="690.5" y1="791.6" x2="691.0" y2="799.6" stroke="#0a4434" stroke-width="1.7"/><line x1="698.8" y1="787.4" x2="699.2" y2="795.4" stroke="#0a4434" stroke-width="1.7"/><line x1="707.0" y1="783.1" x2="707.5" y2="791.1" stroke="#0a4434" stroke-width="1.7"/><line x1="715.2" y1="778.9" x2="715.8" y2="786.9" stroke="#0a4434" stroke-width="1.7"/><line x1="723.5" y1="774.7" x2="724.0" y2="782.7" stroke="#0a4434" stroke-width="1.7"/><line x1="731.8" y1="770.5" x2="732.2" y2="778.5" stroke="#0a4434" stroke-width="1.7"/><line x1="740.0" y1="766.3" x2="740.5" y2="774.3" stroke="#0a4434" stroke-width="1.7"/><line x1="748.2" y1="762.1" x2="748.8" y2="770.1" stroke="#0a4434" stroke-width="1.7"/><line x1="756.5" y1="757.9" x2="757.0" y2="765.9" stroke="#0a4434" stroke-width="1.7"/><line x1="764.8" y1="753.6" x2="765.2" y2="761.6" stroke="#0a4434" stroke-width="1.7"/><line x1="773.0" y1="749.4" x2="773.5" y2="757.4" stroke="#0a4434" stroke-width="1.7"/><line x1="781.2" y1="745.2" x2="781.8" y2="753.2" stroke="#0a4434" stroke-width="1.7"/><line x1="789.5" y1="741.0" x2="790.0" y2="749.0" stroke="#0a4434" stroke-width="1.7"/><line x1="797.8" y1="736.8" x2="798.2" y2="744.8" stroke="#0a4434" stroke-width="1.7"/><line x1="806.0" y1="732.6" x2="806.5" y2="740.6" stroke="#0a4434" stroke-width="1.7"/><line x1="814.2" y1="728.4" x2="814.8" y2="736.4" stroke="#0a4434" stroke-width="1.7"/><line x1="822.5" y1="724.1" x2="823.0" y2="732.1" stroke="#0a4434" stroke-width="1.7"/><line x1="830.8" y1="719.9" x2="831.2" y2="727.9" stroke="#0a4434" stroke-width="1.7"/><line x1="839.0" y1="715.7" x2="839.5" y2="723.7" stroke="#0a4434" stroke-width="1.7"/><line x1="847.2" y1="711.5" x2="847.8" y2="719.5" stroke="#0a4434" stroke-width="1.7"/><line x1="855.5" y1="707.3" x2="856.0" y2="715.3" stroke="#0a4434" stroke-width="1.7"/><line x1="863.8" y1="703.1" x2="864.2" y2="711.1" stroke="#0a4434" stroke-width="1.7"/><line x1="872.0" y1="698.9" x2="872.5" y2="706.9" stroke="#0a4434" stroke-width="1.7"/><line x1="880.2" y1="694.6" x2="880.8" y2="702.6" stroke="#0a4434" stroke-width="1.7"/><line x1="888.5" y1="690.4" x2="889.0" y2="698.4" stroke="#0a4434" stroke-width="1.7"/><line x1="896.8" y1="686.2" x2="897.2" y2="694.2" stroke="#0a4434" stroke-width="1.7"/><line x1="905.0" y1="682.0" x2="905.5" y2="690.0" stroke="#0a4434" stroke-width="1.7"/><line x1="908.0" y1="682.0" x2="908.5" y2="690.0" stroke="#0a4434" stroke-width="1.7"/><line x1="918.6" y1="683.1" x2="919.1" y2="691.1" stroke="#0a4434" stroke-width="1.7"/><line x1="929.2" y1="684.2" x2="929.8" y2="692.2" stroke="#0a4434" stroke-width="1.7"/><line x1="939.9" y1="685.4" x2="940.4" y2="693.4" stroke="#0a4434" stroke-width="1.7"/><line x1="950.5" y1="686.5" x2="951.0" y2="694.5" stroke="#0a4434" stroke-width="1.7"/><line x1="961.1" y1="687.6" x2="961.6" y2="695.6" stroke="#0a4434" stroke-width="1.7"/><line x1="971.8" y1="688.8" x2="972.2" y2="696.8" stroke="#0a4434" stroke-width="1.7"/><line x1="982.4" y1="689.9" x2="982.9" y2="697.9" stroke="#0a4434" stroke-width="1.7"/><line x1="993.0" y1="691.0" x2="993.5" y2="699.0" stroke="#0a4434" stroke-width="1.7"/><line x1="997.0" y1="690.0" x2="997.5" y2="698.0" stroke="#0a4434" stroke-width="1.7"/><line x1="1003.0" y1="686.6" x2="1003.5" y2="694.6" stroke="#0a4434" stroke-width="1.7"/><line x1="1009.0" y1="683.2" x2="1009.5" y2="691.2" stroke="#0a4434" stroke-width="1.7"/><line x1="1015.0" y1="679.9" x2="1015.5" y2="687.9" stroke="#0a4434" stroke-width="1.7"/><line x1="1021.0" y1="676.5" x2="1021.5" y2="684.5" stroke="#0a4434" stroke-width="1.7"/><line x1="1027.0" y1="673.1" x2="1027.5" y2="681.1" stroke="#0a4434" stroke-width="1.7"/><line x1="1033.0" y1="669.8" x2="1033.5" y2="677.8" stroke="#0a4434" stroke-width="1.7"/><line x1="1039.0" y1="666.4" x2="1039.5" y2="674.4" stroke="#0a4434" stroke-width="1.7"/><line x1="1045.0" y1="663.0" x2="1045.5" y2="671.0" stroke="#0a4434" stroke-width="1.7"/><line x1="1048.0" y1="663.0" x2="1048.5" y2="672.0" stroke="#0a4434" stroke-width="1.7"/><line x1="1057.6" y1="663.9" x2="1058.1" y2="672.9" stroke="#0a4434" stroke-width="1.7"/><line x1="1067.2" y1="664.8" x2="1067.7" y2="673.8" stroke="#0a4434" stroke-width="1.7"/><line x1="1076.8" y1="665.8" x2="1077.2" y2="674.8" stroke="#0a4434" stroke-width="1.7"/><line x1="1086.3" y1="666.7" x2="1086.8" y2="675.7" stroke="#0a4434" stroke-width="1.7"/><line x1="1095.9" y1="667.6" x2="1096.4" y2="676.6" stroke="#0a4434" stroke-width="1.7"/><line x1="1105.5" y1="668.5" x2="1106.0" y2="677.5" stroke="#0a4434" stroke-width="1.7"/><line x1="1115.1" y1="669.4" x2="1115.6" y2="678.4" stroke="#0a4434" stroke-width="1.7"/><line x1="1124.7" y1="670.3" x2="1125.2" y2="679.3" stroke="#0a4434" stroke-width="1.7"/><line x1="1134.2" y1="671.2" x2="1134.8" y2="680.2" stroke="#0a4434" stroke-width="1.7"/><line x1="1143.8" y1="672.2" x2="1144.3" y2="681.2" stroke="#0a4434" stroke-width="1.7"/><line x1="1153.4" y1="673.1" x2="1153.9" y2="682.1" stroke="#0a4434" stroke-width="1.7"/><line x1="1163.0" y1="674.0" x2="1163.5" y2="683.0" stroke="#0a4434" stroke-width="1.7"/><line x1="1172.6" y1="674.9" x2="1173.1" y2="683.9" stroke="#0a4434" stroke-width="1.7"/><line x1="1182.2" y1="675.8" x2="1182.7" y2="684.8" stroke="#0a4434" stroke-width="1.7"/><line x1="1191.8" y1="676.8" x2="1192.2" y2="685.8" stroke="#0a4434" stroke-width="1.7"/><line x1="1201.3" y1="677.7" x2="1201.8" y2="686.7" stroke="#0a4434" stroke-width="1.7"/><line x1="1210.9" y1="678.6" x2="1211.4" y2="687.6" stroke="#0a4434" stroke-width="1.7"/><line x1="1220.5" y1="679.5" x2="1221.0" y2="688.5" stroke="#0a4434" stroke-width="1.7"/><line x1="1230.1" y1="680.4" x2="1230.6" y2="689.4" stroke="#0a4434" stroke-width="1.7"/><line x1="1239.7" y1="681.3" x2="1240.2" y2="690.3" stroke="#0a4434" stroke-width="1.7"/><line x1="1249.2" y1="682.2" x2="1249.8" y2="691.2" stroke="#0a4434" stroke-width="1.7"/><line x1="1258.8" y1="683.2" x2="1259.3" y2="692.2" stroke="#0a4434" stroke-width="1.7"/><line x1="1268.4" y1="684.1" x2="1268.9" y2="693.1" stroke="#0a4434" stroke-width="1.7"/><line x1="1278.0" y1="685.0" x2="1278.5" y2="694.0" stroke="#0a4434" stroke-width="1.7"/><line x1="1276.0" y1="690.0" x2="1276.5" y2="696.0" stroke="#0a4434" stroke-width="1.3"/><line x1="1272.7" y1="693.9" x2="1273.2" y2="699.9" stroke="#0a4434" stroke-width="1.3"/><line x1="1269.3" y1="697.8" x2="1269.8" y2="703.8" stroke="#0a4434" stroke-width="1.3"/><line x1="1266.0" y1="701.6" x2="1266.5" y2="707.6" stroke="#0a4434" stroke-width="1.3"/><line x1="1262.7" y1="705.5" x2="1263.2" y2="711.5" stroke="#0a4434" stroke-width="1.3"/><line x1="1259.3" y1="709.4" x2="1259.8" y2="715.4" stroke="#0a4434" stroke-width="1.3"/><line x1="1256.0" y1="713.2" x2="1256.5" y2="719.2" stroke="#0a4434" stroke-width="1.3"/><line x1="1252.7" y1="717.1" x2="1253.2" y2="723.1" stroke="#0a4434" stroke-width="1.3"/><line x1="1249.3" y1="721.0" x2="1249.8" y2="727.0" stroke="#0a4434" stroke-width="1.3"/><line x1="1246.0" y1="724.9" x2="1246.5" y2="730.9" stroke="#0a4434" stroke-width="1.3"/><line x1="1242.7" y1="728.8" x2="1243.2" y2="734.8" stroke="#0a4434" stroke-width="1.3"/><line x1="1239.3" y1="732.6" x2="1239.8" y2="738.6" stroke="#0a4434" stroke-width="1.3"/><line x1="1236.0" y1="736.5" x2="1236.5" y2="742.5" stroke="#0a4434" stroke-width="1.3"/><line x1="1232.7" y1="740.4" x2="1233.2" y2="746.4" stroke="#0a4434" stroke-width="1.3"/><line x1="1229.3" y1="744.2" x2="1229.8" y2="750.2" stroke="#0a4434" stroke-width="1.3"/><line x1="1226.0" y1="748.1" x2="1226.5" y2="754.1" stroke="#0a4434" stroke-width="1.3"/><line x1="1222.7" y1="752.0" x2="1223.2" y2="758.0" stroke="#0a4434" stroke-width="1.3"/><line x1="1219.3" y1="755.9" x2="1219.8" y2="761.9" stroke="#0a4434" stroke-width="1.3"/><line x1="1216.0" y1="759.8" x2="1216.5" y2="765.8" stroke="#0a4434" stroke-width="1.3"/><line x1="1212.7" y1="763.6" x2="1213.2" y2="769.6" stroke="#0a4434" stroke-width="1.3"/><line x1="1209.3" y1="767.5" x2="1209.8" y2="773.5" stroke="#0a4434" stroke-width="1.3"/><line x1="1206.0" y1="771.4" x2="1206.5" y2="777.4" stroke="#0a4434" stroke-width="1.3"/><line x1="1202.7" y1="775.2" x2="1203.2" y2="781.2" stroke="#0a4434" stroke-width="1.3"/><line x1="1199.3" y1="779.1" x2="1199.8" y2="785.1" stroke="#0a4434" stroke-width="1.3"/><line x1="1196.0" y1="783.0" x2="1196.5" y2="789.0" stroke="#0a4434" stroke-width="1.3"/><line x1="1192.0" y1="797.0" x2="1192.5" y2="807.0" stroke="#0a4434" stroke-width="1.7"/><line x1="1202.8" y1="798.8" x2="1203.3" y2="808.8" stroke="#0a4434" stroke-width="1.7"/><line x1="1213.6" y1="800.6" x2="1214.1" y2="810.6" stroke="#0a4434" stroke-width="1.7"/><line x1="1224.4" y1="802.4" x2="1224.9" y2="812.4" stroke="#0a4434" stroke-width="1.7"/><line x1="1235.2" y1="804.2" x2="1235.7" y2="814.2" stroke="#0a4434" stroke-width="1.7"/><line x1="1246.0" y1="806.0" x2="1246.5" y2="816.0" stroke="#0a4434" stroke-width="1.7"/><line x1="1243.0" y1="808.0" x2="1243.5" y2="815.0" stroke="#0a4434" stroke-width="1.3"/><line x1="1240.1" y1="812.4" x2="1240.6" y2="819.4" stroke="#0a4434" stroke-width="1.3"/><line x1="1237.2" y1="816.8" x2="1237.7" y2="823.8" stroke="#0a4434" stroke-width="1.3"/><line x1="1234.3" y1="821.2" x2="1234.8" y2="828.2" stroke="#0a4434" stroke-width="1.3"/><line x1="1231.4" y1="825.6" x2="1231.9" y2="832.6" stroke="#0a4434" stroke-width="1.3"/><line x1="1228.5" y1="830.0" x2="1229.0" y2="837.0" stroke="#0a4434" stroke-width="1.3"/><line x1="1225.6" y1="834.4" x2="1226.1" y2="841.4" stroke="#0a4434" stroke-width="1.3"/><line x1="1222.7" y1="838.8" x2="1223.2" y2="845.8" stroke="#0a4434" stroke-width="1.3"/><line x1="1219.8" y1="843.2" x2="1220.3" y2="850.2" stroke="#0a4434" stroke-width="1.3"/><line x1="1216.9" y1="847.6" x2="1217.4" y2="854.6" stroke="#0a4434" stroke-width="1.3"/><line x1="1214.0" y1="852.0" x2="1214.5" y2="859.0" stroke="#0a4434" stroke-width="1.3"/><polygon points="646.0,794.0 905.0,670.0 905.0,681.0 672.0,802.0" fill="#038003"/><polygon points="905.0,670.0 995.0,679.5 997.0,690.5 905.0,681.0" fill="#038003"/><polygon points="995.0,679.5 1044.0,651.5 1047.0,662.0 997.0,690.5" fill="#038003"/><polygon points="1044.0,651.5 1289.0,676.0 1278.5,685.0 1047.0,662.0" fill="#038003"/><polygon points="1289.0,676.0 1289.0,691.0 1200.0,791.0 1190.0,787.0 1278.5,685.0" fill="#038003"/><polygon points="1190.0,786.0 1251.0,794.5 1246.0,806.0 1190.0,797.0" fill="#038003"/><polygon points="1251.0,794.5 1251.0,808.0 1218.0,860.0 1203.0,860.0 1240.0,806.0" fill="#038003"/><line x1="840.0" y1="795.0" x2="840.5" y2="799.0" stroke="#0a4434" stroke-width="1.2"/><line x1="844.0" y1="792.4" x2="844.5" y2="796.4" stroke="#0a4434" stroke-width="1.2"/><line x1="848.0" y1="789.9" x2="848.5" y2="793.9" stroke="#0a4434" stroke-width="1.2"/><line x1="852.0" y1="787.3" x2="852.5" y2="791.3" stroke="#0a4434" stroke-width="1.2"/><line x1="856.0" y1="784.7" x2="856.5" y2="788.7" stroke="#0a4434" stroke-width="1.2"/><line x1="860.0" y1="782.1" x2="860.5" y2="786.1" stroke="#0a4434" stroke-width="1.2"/><line x1="864.0" y1="779.6" x2="864.5" y2="783.6" stroke="#0a4434" stroke-width="1.2"/><line x1="868.0" y1="777.0" x2="868.5" y2="781.0" stroke="#0a4434" stroke-width="1.2"/><line x1="872.0" y1="774.4" x2="872.5" y2="778.4" stroke="#0a4434" stroke-width="1.2"/><line x1="876.0" y1="771.9" x2="876.5" y2="775.9" stroke="#0a4434" stroke-width="1.2"/><line x1="880.0" y1="769.3" x2="880.5" y2="773.3" stroke="#0a4434" stroke-width="1.2"/><line x1="884.0" y1="766.7" x2="884.5" y2="770.7" stroke="#0a4434" stroke-width="1.2"/><line x1="888.0" y1="764.1" x2="888.5" y2="768.1" stroke="#0a4434" stroke-width="1.2"/><line x1="892.0" y1="761.6" x2="892.5" y2="765.6" stroke="#0a4434" stroke-width="1.2"/><line x1="896.0" y1="759.0" x2="896.5" y2="763.0" stroke="#0a4434" stroke-width="1.2"/><line x1="898.0" y1="759.0" x2="898.5" y2="763.0" stroke="#0a4434" stroke-width="1.2"/><line x1="902.7" y1="759.6" x2="903.2" y2="763.6" stroke="#0a4434" stroke-width="1.2"/><line x1="907.4" y1="760.1" x2="907.9" y2="764.1" stroke="#0a4434" stroke-width="1.2"/><line x1="912.1" y1="760.7" x2="912.6" y2="764.7" stroke="#0a4434" stroke-width="1.2"/><line x1="916.9" y1="761.3" x2="917.4" y2="765.3" stroke="#0a4434" stroke-width="1.2"/><line x1="921.6" y1="761.9" x2="922.1" y2="765.9" stroke="#0a4434" stroke-width="1.2"/><line x1="926.3" y1="762.4" x2="926.8" y2="766.4" stroke="#0a4434" stroke-width="1.2"/><line x1="931.0" y1="763.0" x2="931.5" y2="767.0" stroke="#0a4434" stroke-width="1.2"/><line x1="935.7" y1="763.6" x2="936.2" y2="767.6" stroke="#0a4434" stroke-width="1.2"/><line x1="940.4" y1="764.1" x2="940.9" y2="768.1" stroke="#0a4434" stroke-width="1.2"/><line x1="945.1" y1="764.7" x2="945.6" y2="768.7" stroke="#0a4434" stroke-width="1.2"/><line x1="949.9" y1="765.3" x2="950.4" y2="769.3" stroke="#0a4434" stroke-width="1.2"/><line x1="954.6" y1="765.9" x2="955.1" y2="769.9" stroke="#0a4434" stroke-width="1.2"/><line x1="959.3" y1="766.4" x2="959.8" y2="770.4" stroke="#0a4434" stroke-width="1.2"/><line x1="964.0" y1="767.0" x2="964.5" y2="771.0" stroke="#0a4434" stroke-width="1.2"/><line x1="838.0" y1="796.0" x2="838.5" y2="800.0" stroke="#0a4434" stroke-width="1.2"/><line x1="842.7" y1="797.1" x2="843.2" y2="801.1" stroke="#0a4434" stroke-width="1.2"/><line x1="847.3" y1="798.2" x2="847.8" y2="802.2" stroke="#0a4434" stroke-width="1.2"/><line x1="852.0" y1="799.2" x2="852.5" y2="803.2" stroke="#0a4434" stroke-width="1.2"/><line x1="856.7" y1="800.3" x2="857.2" y2="804.3" stroke="#0a4434" stroke-width="1.2"/><line x1="861.3" y1="801.4" x2="861.8" y2="805.4" stroke="#0a4434" stroke-width="1.2"/><line x1="866.0" y1="802.5" x2="866.5" y2="806.5" stroke="#0a4434" stroke-width="1.2"/><line x1="870.7" y1="803.6" x2="871.2" y2="807.6" stroke="#0a4434" stroke-width="1.2"/><line x1="875.3" y1="804.7" x2="875.8" y2="808.7" stroke="#0a4434" stroke-width="1.2"/><line x1="880.0" y1="805.8" x2="880.5" y2="809.8" stroke="#0a4434" stroke-width="1.2"/><line x1="884.7" y1="806.8" x2="885.2" y2="810.8" stroke="#0a4434" stroke-width="1.2"/><line x1="889.3" y1="807.9" x2="889.8" y2="811.9" stroke="#0a4434" stroke-width="1.2"/><line x1="894.0" y1="809.0" x2="894.5" y2="813.0" stroke="#0a4434" stroke-width="1.2"/><line x1="900.0" y1="810.0" x2="900.5" y2="814.0" stroke="#0a4434" stroke-width="1.2"/><line x1="904.8" y1="810.8" x2="905.3" y2="814.8" stroke="#0a4434" stroke-width="1.2"/><line x1="909.5" y1="811.5" x2="910.0" y2="815.5" stroke="#0a4434" stroke-width="1.2"/><line x1="914.3" y1="812.3" x2="914.8" y2="816.3" stroke="#0a4434" stroke-width="1.2"/><line x1="919.1" y1="813.1" x2="919.6" y2="817.1" stroke="#0a4434" stroke-width="1.2"/><line x1="923.8" y1="813.8" x2="924.3" y2="817.8" stroke="#0a4434" stroke-width="1.2"/><line x1="928.6" y1="814.6" x2="929.1" y2="818.6" stroke="#0a4434" stroke-width="1.2"/><line x1="933.4" y1="815.4" x2="933.9" y2="819.4" stroke="#0a4434" stroke-width="1.2"/><line x1="938.2" y1="816.2" x2="938.7" y2="820.2" stroke="#0a4434" stroke-width="1.2"/><line x1="942.9" y1="816.9" x2="943.4" y2="820.9" stroke="#0a4434" stroke-width="1.2"/><line x1="947.7" y1="817.7" x2="948.2" y2="821.7" stroke="#0a4434" stroke-width="1.2"/><line x1="952.5" y1="818.5" x2="953.0" y2="822.5" stroke="#0a4434" stroke-width="1.2"/><line x1="957.2" y1="819.2" x2="957.7" y2="823.2" stroke="#0a4434" stroke-width="1.2"/><line x1="962.0" y1="820.0" x2="962.5" y2="824.0" stroke="#0a4434" stroke-width="1.2"/><polygon points="836.0,790.0 896.5,753.5 896.5,758.5 838.0,795.0" fill="#038003"/><polygon points="896.5,753.5 966.0,761.0 966.0,766.0 896.5,758.5" fill="#038003"/><polygon points="836.0,790.0 895.0,803.0 895.0,809.0 836.0,796.0" fill="#038003"/><polygon points="900.0,804.0 964.0,814.0 964.0,820.0 900.0,810.0" fill="#038003"/><polygon points="962.0,816.0 1008.0,780.0 1010.0,785.0 964.0,821.0" fill="#038003"/><rect x="965" y="758" width="6.5" height="33.0" fill="#0a780a"/><rect x="975" y="758" width="6.5" height="32.2" fill="#0a780a"/><rect x="986" y="758" width="6.5" height="31.4" fill="#0a780a"/><rect x="997" y="758" width="6.5" height="30.6" fill="#0a780a"/><rect x="1008" y="758" width="6.5" height="29.8" fill="#0a780a"/><rect x="1018" y="758" width="6.5" height="29.0" fill="#0a780a"/><rect x="1027" y="757.8" width="7" height="22.2" fill="#0a780a"/><rect x="1038" y="749.9" width="7" height="24.0" fill="#0a780a"/><rect x="1050" y="741.3" width="7" height="26.1" fill="#0a780a"/><rect x="1062" y="732.6" width="7" height="28.1" fill="#0a780a"/><rect x="1074" y="724.0" width="7" height="30.1" fill="#0a780a"/><rect x="1085" y="716.1" width="7" height="32.0" fill="#0a780a"/><polygon points="965.0,753.0 1024.5,761.0 1091.6,713.0 1091.6,722.0 1024.5,770.0 965.0,762.0" fill="#087c08"/><polygon points="965.0,753.0 1024.5,761.0 1091.6,713.0 1032.0,706.0" fill="#e8e81c"/><rect x="995" y="746" width="24" height="6" fill="#0c700c" transform="rotate(-34 995 746)"/><rect x="1008" y="737" width="22" height="6" fill="#0c700c" transform="rotate(-34 1008 737)"/><rect x="1022" y="727" width="20" height="6" fill="#0c700c" transform="rotate(-34 1022 727)"/><rect x="1038" y="718" width="18" height="5" fill="#0c700c" transform="rotate(-34 1038 718)"/><rect x="1050" y="727" width="16" height="5" fill="#0c700c" transform="rotate(-34 1050 727)"/><rect x="1034" y="739" width="16" height="5" fill="#0c700c" transform="rotate(-34 1034 739)"/><rect x="1016" y="750" width="14" height="4" fill="#0c700c" transform="rotate(-34 1016 750)"/><rect x="1062" y="720" width="10" height="4" fill="#0c700c" transform="rotate(-34 1062 720)"/><rect x="1045" y="712" width="12" height="4" fill="#0c700c" transform="rotate(-34 1045 712)"/><polygon points="966.0,712.0 1056.0,664.0 1066.0,666.0 1066.0,671.0 998.0,707.0 972.0,722.0 966.0,722.0" fill="#f21818"/><line x1="966.0" y1="716.0" x2="966.0" y2="753.0" stroke="#f21818" stroke-width="2"/><line x1="975.8" y1="712.0" x2="975.8" y2="754.2" stroke="#f21818" stroke-width="2"/><line x1="985.5" y1="708.0" x2="985.5" y2="755.4" stroke="#f21818" stroke-width="2"/><line x1="995.2" y1="704.0" x2="995.2" y2="756.6" stroke="#f21818" stroke-width="2"/><line x1="1005.0" y1="710.0" x2="1005.0" y2="757.8" stroke="#f21818" stroke-width="2"/><line x1="1014.8" y1="716.0" x2="1014.8" y2="759.0" stroke="#f21818" stroke-width="2"/><line x1="1024.5" y1="722.0" x2="1024.5" y2="760.2" stroke="#f21818" stroke-width="2"/><line x1="1024.5" y1="720.0" x2="1024.5" y2="761.0" stroke="#f21818" stroke-width="2"/><line x1="1035.7" y1="713.3" x2="1035.7" y2="752.9" stroke="#f21818" stroke-width="2"/><line x1="1046.9" y1="706.6" x2="1046.9" y2="744.9" stroke="#f21818" stroke-width="2"/><line x1="1058.1" y1="699.8" x2="1058.1" y2="736.8" stroke="#f21818" stroke-width="2"/><line x1="1069.3" y1="693.1" x2="1069.3" y2="728.7" stroke="#f21818" stroke-width="2"/><line x1="1080.5" y1="686.4" x2="1080.5" y2="720.7" stroke="#f21818" stroke-width="2"/><line x1="1091.7" y1="679.7" x2="1091.7" y2="712.6" stroke="#f21818" stroke-width="2"/><polygon points="998,704 1065,667 1091,680 1024.5,720" fill="rgba(230,40,60,0.28)"/><polygon points="1064,666 1091,680 1091,713 1070,700" fill="rgba(230,40,60,0.18)"/><line x1="1066" y1="668" x2="1090" y2="711" stroke="#f21818" stroke-width="1"/><line x1="1090" y1="681" x2="1068" y2="700" stroke="#f21818" stroke-width="1"/><line x1="1000.0" y1="704.0" x2="1065.0" y2="667.0" stroke="#f21818" stroke-width="1.3"/><line x1="1004.9" y1="707.2" x2="1070.2" y2="669.6" stroke="#f21818" stroke-width="1.3"/><line x1="1009.8" y1="710.4" x2="1075.4" y2="672.2" stroke="#f21818" stroke-width="1.3"/><line x1="1014.7" y1="713.6" x2="1080.6" y2="674.8" stroke="#f21818" stroke-width="1.3"/><line x1="1019.6" y1="716.8" x2="1085.8" y2="677.4" stroke="#f21818" stroke-width="1.3"/><line x1="1024.5" y1="720.0" x2="1091.0" y2="680.0" stroke="#f21818" stroke-width="1.3"/><line x1="1000.0" y1="704.0" x2="1024.5" y2="720.0" stroke="#f21818" stroke-width="1.8"/><line x1="1010.8" y1="697.8" x2="1035.6" y2="713.3" stroke="#f21818" stroke-width="1.8"/><line x1="1021.7" y1="691.7" x2="1046.7" y2="706.7" stroke="#f21818" stroke-width="1.8"/><line x1="1032.5" y1="685.5" x2="1057.8" y2="700.0" stroke="#f21818" stroke-width="1.8"/><line x1="1043.3" y1="679.3" x2="1068.8" y2="693.3" stroke="#f21818" stroke-width="1.8"/><line x1="1054.2" y1="673.2" x2="1079.9" y2="686.7" stroke="#f21818" stroke-width="1.8"/><line x1="1065.0" y1="667.0" x2="1091.0" y2="680.0" stroke="#f21818" stroke-width="1.8"/><polyline points="966,716 995,701 1024.5,720 1091,680 1064,666" fill="none" stroke="#f21818" stroke-width="2"/><line x1="1091" y1="680" x2="1091" y2="713" stroke="#f21818" stroke-width="2.2"/><polygon points="1022.0,772.4 1149.0,788.4 1124.7,814.6 1004.2,797.7" fill="#077207"/><polygon points="1004.2,797.7 1124.7,814.6 1123.8,845.0 1006.7,828.0" fill="#076a07"/><polygon points="1124.7,814.6 1149.0,788.4 1146.6,821.3 1123.8,845.0" fill="#066206"/><polyline points="1004.2,797.7 1124.7,814.6 1149,788.4" fill="none" stroke="#0f8a0f" stroke-width="0.8"/><rect x="1019.0" y="805.0" width="4.5" height="6" fill="none" stroke="#1f8f1f" stroke-width="0.7"/><rect x="1042.5" y="808.4" width="4.5" height="6" fill="none" stroke="#1f8f1f" stroke-width="0.7"/><rect x="1066.0" y="811.8" width="4.5" height="6" fill="none" stroke="#1f8f1f" stroke-width="0.7"/><rect x="1089.5" y="815.2" width="4.5" height="6" fill="none" stroke="#1f8f1f" stroke-width="0.7"/><rect x="1113.0" y="818.6" width="4.5" height="6" fill="none" stroke="#1f8f1f" stroke-width="0.7"/><rect x="1019.0" y="818.0" width="4.5" height="6" fill="none" stroke="#1f8f1f" stroke-width="0.7"/><rect x="1042.5" y="821.4" width="4.5" height="6" fill="none" stroke="#1f8f1f" stroke-width="0.7"/><rect x="1066.0" y="824.8" width="4.5" height="6" fill="none" stroke="#1f8f1f" stroke-width="0.7"/><rect x="1089.5" y="828.2" width="4.5" height="6" fill="none" stroke="#1f8f1f" stroke-width="0.7"/><rect x="1113.0" y="831.6" width="4.5" height="6" fill="none" stroke="#1f8f1f" stroke-width="0.7"/><rect x="1128.0" y="808.0" width="2.5" height="6" fill="none" stroke="#1f8f1f" stroke-width="0.6"/><rect x="1132.8" y="802.8" width="2.5" height="6" fill="none" stroke="#1f8f1f" stroke-width="0.6"/><rect x="1137.6" y="797.6" width="2.5" height="6" fill="none" stroke="#1f8f1f" stroke-width="0.6"/><rect x="1142.4" y="792.4" width="2.5" height="6" fill="none" stroke="#1f8f1f" stroke-width="0.6"/><rect x="1128.0" y="820.0" width="2.5" height="6" fill="none" stroke="#1f8f1f" stroke-width="0.6"/><rect x="1132.8" y="814.8" width="2.5" height="6" fill="none" stroke="#1f8f1f" stroke-width="0.6"/><rect x="1137.6" y="809.6" width="2.5" height="6" fill="none" stroke="#1f8f1f" stroke-width="0.6"/><rect x="1142.4" y="804.4" width="2.5" height="6" fill="none" stroke="#1f8f1f" stroke-width="0.6"/><polygon points="1135.6,750.5 1183.6,717.7 1201.3,726.1 1162.0,755.0 1150.0,741.0" fill="#077407"/><polygon points="1135.6,750.5 1150.0,741.0 1162.0,755.0 1161.7,770.0 1137.3,765.7" fill="#076a07"/><polygon points="1162.0,755.0 1201.3,726.1 1198.8,739.6 1161.7,770.0" fill="#066206"/><polygon points="1154.5,877.0 1194.0,852.0 1219.0,865.5 1207.0,873.0 1182.0,885.0 1168.0,868.0" fill="#077407"/><polygon points="1154.5,877.0 1168.0,868.0 1182.0,885.0 1181.0,902.0 1156.0,895.0" fill="#076a07"/><polygon points="1182.0,885.0 1219.0,865.5 1217.0,885.0 1181.0,902.0" fill="#066206"/><line x1="648.0" y1="808.0" x2="648.5" y2="818.0" stroke="#0a4434" stroke-width="1.8"/><line x1="657.9" y1="809.6" x2="658.4" y2="819.6" stroke="#0a4434" stroke-width="1.8"/><line x1="667.9" y1="811.2" x2="668.4" y2="821.2" stroke="#0a4434" stroke-width="1.8"/><line x1="677.8" y1="812.8" x2="678.3" y2="822.8" stroke="#0a4434" stroke-width="1.8"/><line x1="687.8" y1="814.4" x2="688.3" y2="824.4" stroke="#0a4434" stroke-width="1.8"/><line x1="697.7" y1="816.0" x2="698.2" y2="826.0" stroke="#0a4434" stroke-width="1.8"/><line x1="707.6" y1="817.6" x2="708.1" y2="827.6" stroke="#0a4434" stroke-width="1.8"/><line x1="717.6" y1="819.3" x2="718.1" y2="829.3" stroke="#0a4434" stroke-width="1.8"/><line x1="727.5" y1="820.9" x2="728.0" y2="830.9" stroke="#0a4434" stroke-width="1.8"/><line x1="737.5" y1="822.5" x2="738.0" y2="832.5" stroke="#0a4434" stroke-width="1.8"/><line x1="747.4" y1="824.1" x2="747.9" y2="834.1" stroke="#0a4434" stroke-width="1.8"/><line x1="757.4" y1="825.7" x2="757.9" y2="835.7" stroke="#0a4434" stroke-width="1.8"/><line x1="767.3" y1="827.3" x2="767.8" y2="837.3" stroke="#0a4434" stroke-width="1.8"/><line x1="777.2" y1="828.9" x2="777.7" y2="838.9" stroke="#0a4434" stroke-width="1.8"/><line x1="787.2" y1="830.5" x2="787.7" y2="840.5" stroke="#0a4434" stroke-width="1.8"/><line x1="797.1" y1="832.1" x2="797.6" y2="842.1" stroke="#0a4434" stroke-width="1.8"/><line x1="807.1" y1="833.7" x2="807.6" y2="843.7" stroke="#0a4434" stroke-width="1.8"/><line x1="817.0" y1="835.3" x2="817.5" y2="845.3" stroke="#0a4434" stroke-width="1.8"/><line x1="826.9" y1="836.9" x2="827.4" y2="846.9" stroke="#0a4434" stroke-width="1.8"/><line x1="836.9" y1="838.5" x2="837.4" y2="848.5" stroke="#0a4434" stroke-width="1.8"/><line x1="846.8" y1="840.2" x2="847.3" y2="850.2" stroke="#0a4434" stroke-width="1.8"/><line x1="856.8" y1="841.8" x2="857.3" y2="851.8" stroke="#0a4434" stroke-width="1.8"/><line x1="866.7" y1="843.4" x2="867.2" y2="853.4" stroke="#0a4434" stroke-width="1.8"/><line x1="876.6" y1="845.0" x2="877.1" y2="855.0" stroke="#0a4434" stroke-width="1.8"/><line x1="886.6" y1="846.6" x2="887.1" y2="856.6" stroke="#0a4434" stroke-width="1.8"/><line x1="896.5" y1="848.2" x2="897.0" y2="858.2" stroke="#0a4434" stroke-width="1.8"/><line x1="906.5" y1="849.8" x2="907.0" y2="859.8" stroke="#0a4434" stroke-width="1.8"/><line x1="916.4" y1="851.4" x2="916.9" y2="861.4" stroke="#0a4434" stroke-width="1.8"/><line x1="926.4" y1="853.0" x2="926.9" y2="863.0" stroke="#0a4434" stroke-width="1.8"/><line x1="936.3" y1="854.6" x2="936.8" y2="864.6" stroke="#0a4434" stroke-width="1.8"/><line x1="946.2" y1="856.2" x2="946.7" y2="866.2" stroke="#0a4434" stroke-width="1.8"/><line x1="956.2" y1="857.8" x2="956.7" y2="867.8" stroke="#0a4434" stroke-width="1.8"/><line x1="966.1" y1="859.5" x2="966.6" y2="869.5" stroke="#0a4434" stroke-width="1.8"/><line x1="976.1" y1="861.1" x2="976.6" y2="871.1" stroke="#0a4434" stroke-width="1.8"/><line x1="986.0" y1="862.7" x2="986.5" y2="872.7" stroke="#0a4434" stroke-width="1.8"/><line x1="995.9" y1="864.3" x2="996.4" y2="874.3" stroke="#0a4434" stroke-width="1.8"/><line x1="1005.9" y1="865.9" x2="1006.4" y2="875.9" stroke="#0a4434" stroke-width="1.8"/><line x1="1015.8" y1="867.5" x2="1016.3" y2="877.5" stroke="#0a4434" stroke-width="1.8"/><line x1="1025.8" y1="869.1" x2="1026.3" y2="879.1" stroke="#0a4434" stroke-width="1.8"/><line x1="1035.7" y1="870.7" x2="1036.2" y2="880.7" stroke="#0a4434" stroke-width="1.8"/><line x1="1045.6" y1="872.3" x2="1046.1" y2="882.3" stroke="#0a4434" stroke-width="1.8"/><line x1="1055.6" y1="873.9" x2="1056.1" y2="883.9" stroke="#0a4434" stroke-width="1.8"/><line x1="1065.5" y1="875.5" x2="1066.0" y2="885.5" stroke="#0a4434" stroke-width="1.8"/><line x1="1075.5" y1="877.1" x2="1076.0" y2="887.1" stroke="#0a4434" stroke-width="1.8"/><line x1="1085.4" y1="878.7" x2="1085.9" y2="888.7" stroke="#0a4434" stroke-width="1.8"/><line x1="1095.4" y1="880.4" x2="1095.9" y2="890.4" stroke="#0a4434" stroke-width="1.8"/><line x1="1105.3" y1="882.0" x2="1105.8" y2="892.0" stroke="#0a4434" stroke-width="1.8"/><line x1="1115.2" y1="883.6" x2="1115.7" y2="893.6" stroke="#0a4434" stroke-width="1.8"/><line x1="1125.2" y1="885.2" x2="1125.7" y2="895.2" stroke="#0a4434" stroke-width="1.8"/><line x1="1135.1" y1="886.8" x2="1135.6" y2="896.8" stroke="#0a4434" stroke-width="1.8"/><line x1="1145.1" y1="888.4" x2="1145.6" y2="898.4" stroke="#0a4434" stroke-width="1.8"/><line x1="1155.0" y1="890.0" x2="1155.5" y2="900.0" stroke="#0a4434" stroke-width="1.8"/><polygon points="646.0,795.0 1155.0,877.0 1155.0,890.0 646.0,808.0" fill="#038003"/></g></svg>
</body></html>
